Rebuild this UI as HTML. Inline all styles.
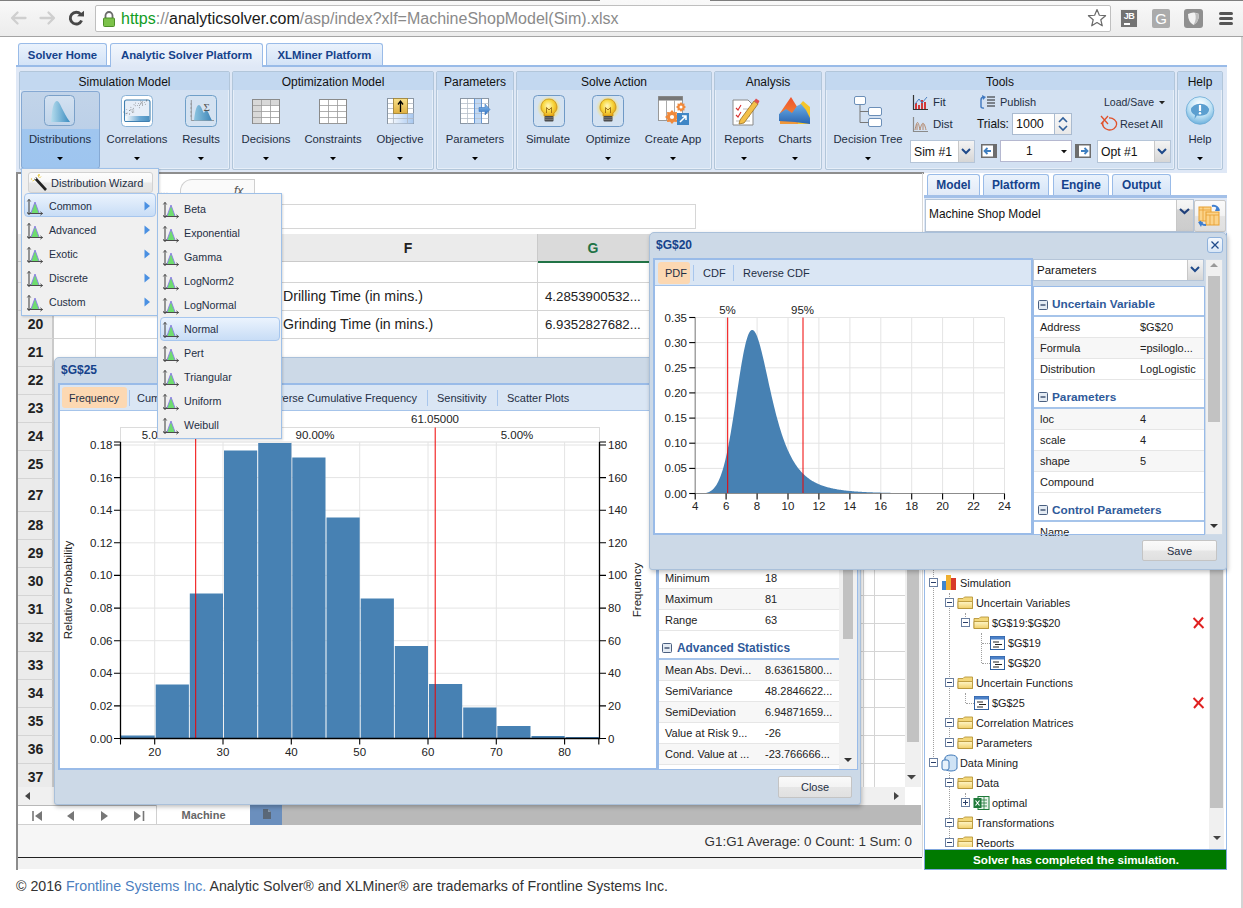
<!DOCTYPE html>
<html><head><meta charset="utf-8">
<style>
*{box-sizing:border-box;margin:0;padding:0}
html,body{width:1243px;height:908px;overflow:hidden;background:#fff;font-family:"Liberation Sans",sans-serif;font-size:12px;color:#000}
body{position:relative}
.a{position:absolute}
.t{white-space:nowrap}
svg.a{overflow:visible}
</style></head><body>
<div class="a" style="left:0px;top:0px;width:1243px;height:37px;background:linear-gradient(#f9f9f9,#ececec);border-bottom:1px solid #a4a4a4"></div>
<div class="a" style="left:0px;top:0px;width:600px;height:1px;background:#7e7e7e"></div>
<div class="a" style="left:710px;top:0px;width:533px;height:1px;background:#7e7e7e"></div>
<svg class="a" style="left:0px;top:0px;" width="100" height="37" viewBox="0 0 100 37"><path d="M25.5 18H12.5M17.5 12.5L12 18L17.5 23.5" stroke="#cfcfcf" stroke-width="2.3" fill="none" stroke-linecap="round" stroke-linejoin="round"/><path d="M40.5 18H53.5M48.5 12.5L54 18L48.5 23.5" stroke="#cfcfcf" stroke-width="2.3" fill="none" stroke-linecap="round" stroke-linejoin="round"/><path d="M80.6 14.2A5.9 5.9 0 1 0 81.6 20.5" stroke="#474747" stroke-width="2.9" fill="none"/><path d="M77 16.2L84 16.6L84 10.8Z" fill="#474747"/></svg>
<div class="a" style="left:95px;top:5px;width:1016px;height:27px;background:#fff;border:1px solid #bfbfbf;border-radius:2px"></div>
<svg class="a" style="left:102px;top:10px;" width="14" height="18" viewBox="0 0 14 18"><path d="M3.5 8V5.5A3.5 3.5 0 0 1 10.5 5.5V8" stroke="#6b6b6b" stroke-width="1.8" fill="none"/><rect x="1.5" y="8" width="11" height="8.5" rx="1" fill="#7cc24a" stroke="#4f8f2a" stroke-width="1"/></svg>
<div class="a t" style="left:121px;top:9.5px;height:18px;line-height:18px;font-size:16px;color:#8a8a8a"><span style="color:#119c24">https</span>://<span style="color:#1a1a1a">analyticsolver.com</span>/asp/index?xlf=MachineShopModel(Sim).xlsx</div>
<svg class="a" style="left:1087px;top:8px;" width="20" height="20" viewBox="0 0 20 20"><polygon points="10.00,1.50 12.35,7.26 18.56,7.72 13.80,11.74 15.29,17.78 10.00,14.50 4.71,17.78 6.20,11.74 1.44,7.72 7.65,7.26" fill="none" stroke="#6a6a6a" stroke-width="1.2" stroke-linejoin="round"/></svg>
<div class="a" style="left:1120px;top:9px;width:18px;height:19px;background:#737373;border:1px solid #eee;color:#fff;font-weight:bold;font-size:9px;line-height:10px;text-align:center;letter-spacing:-0.5px"><div style="margin-top:1px">JB</div><div style="position:absolute;left:3px;top:13px;width:6px;height:2px;background:#fff"></div></div>
<div class="a" style="left:1152px;top:9px;width:18px;height:19px;background:#ababab;border-radius:2px;color:#fff;font-size:15px;line-height:19px;text-align:center">G</div>
<svg class="a" style="left:1184px;top:9px;" width="19" height="19" viewBox="0 0 19 19"><rect x="0" y="0" width="19" height="19" rx="3" fill="#8f8f8f"/><path d="M4 5 Q9.5 2 15 5 Q15 13 9.5 16 Q4 13 4 5Z" fill="#f2f2f2"/><path d="M15 5 Q15 13 9.5 16 Q13 10 11 4Z" fill="#bdbdbd"/></svg>
<div class="a" style="left:1219px;top:12px;width:14px;height:3px;background:#555;border-radius:1.5px"></div>
<div class="a" style="left:1219px;top:17px;width:14px;height:3px;background:#555;border-radius:1.5px"></div>
<div class="a" style="left:1219px;top:22px;width:14px;height:3px;background:#555;border-radius:1.5px"></div>
<div class="a" style="left:1241px;top:37px;width:2px;height:871px;background:#d4d4d4"></div>
<div class="a" style="left:16px;top:65px;width:1211px;height:2px;background:#99bbe8"></div>
<div class="a" style="left:18px;top:43px;width:89px;height:22px;background:linear-gradient(#eaf2fc,#d3e3f7);border:1px solid #99bbe8;border-bottom:none;border-radius:3px 3px 0 0"></div>
<div class="a t" style="left:2.50px;top:47.50px;width:120px;text-align:center;height:15px;line-height:15px;font-size:11.35px;font-weight:bold;color:#15428b">Solver Home</div>
<div class="a" style="left:110px;top:43px;width:153px;height:24px;background:linear-gradient(#f2f7fd,#dfe8f6);border:1px solid #99bbe8;border-bottom:none;border-radius:3px 3px 0 0"></div>
<div class="a t" style="left:86.50px;top:47.50px;width:200px;text-align:center;height:15px;line-height:15px;font-size:11.35px;font-weight:bold;color:#15428b">Analytic Solver Platform</div>
<div class="a" style="left:266px;top:43px;width:117px;height:22px;background:linear-gradient(#eaf2fc,#d3e3f7);border:1px solid #99bbe8;border-bottom:none;border-radius:3px 3px 0 0"></div>
<div class="a t" style="left:249.50px;top:47.50px;width:150px;text-align:center;height:15px;line-height:15px;font-size:11.35px;font-weight:bold;color:#15428b">XLMiner Platform</div>
<div class="a" style="left:16px;top:67px;width:1211px;height:106px;background:#dfe8f6"></div>
<div class="a" style="left:16px;top:172px;width:908px;height:2px;background:#8e8e8e"></div>
<div class="a" style="left:19px;top:71px;width:211px;height:99px;background:#d3e1f2;border:1px solid #b2c6da;border-radius:2px;box-shadow:inset 0 0 0 1px #e6eef8"></div>
<div class="a" style="left:20px;top:72px;width:209px;height:18px;background:#c3d8f0"></div>
<div class="a t" style="left:24.50px;top:73.50px;width:200px;text-align:center;height:16px;line-height:16px;font-size:12px;color:#111">Simulation Model</div>
<div class="a" style="left:232px;top:71px;width:202px;height:99px;background:#d3e1f2;border:1px solid #b2c6da;border-radius:2px;box-shadow:inset 0 0 0 1px #e6eef8"></div>
<div class="a" style="left:233px;top:72px;width:200px;height:18px;background:#c3d8f0"></div>
<div class="a t" style="left:233.00px;top:73.50px;width:200px;text-align:center;height:16px;line-height:16px;font-size:12px;color:#111">Optimization Model</div>
<div class="a" style="left:436px;top:71px;width:78px;height:99px;background:#d3e1f2;border:1px solid #b2c6da;border-radius:2px;box-shadow:inset 0 0 0 1px #e6eef8"></div>
<div class="a" style="left:437px;top:72px;width:76px;height:18px;background:#c3d8f0"></div>
<div class="a t" style="left:375.00px;top:73.50px;width:200px;text-align:center;height:16px;line-height:16px;font-size:12px;color:#111">Parameters</div>
<div class="a" style="left:516px;top:71px;width:196px;height:99px;background:#d3e1f2;border:1px solid #b2c6da;border-radius:2px;box-shadow:inset 0 0 0 1px #e6eef8"></div>
<div class="a" style="left:517px;top:72px;width:194px;height:18px;background:#c3d8f0"></div>
<div class="a t" style="left:514.00px;top:73.50px;width:200px;text-align:center;height:16px;line-height:16px;font-size:12px;color:#111">Solve Action</div>
<div class="a" style="left:714px;top:71px;width:108px;height:99px;background:#d3e1f2;border:1px solid #b2c6da;border-radius:2px;box-shadow:inset 0 0 0 1px #e6eef8"></div>
<div class="a" style="left:715px;top:72px;width:106px;height:18px;background:#c3d8f0"></div>
<div class="a t" style="left:668.00px;top:73.50px;width:200px;text-align:center;height:16px;line-height:16px;font-size:12px;color:#111">Analysis</div>
<div class="a" style="left:825px;top:71px;width:350px;height:99px;background:#d3e1f2;border:1px solid #b2c6da;border-radius:2px;box-shadow:inset 0 0 0 1px #e6eef8"></div>
<div class="a" style="left:826px;top:72px;width:348px;height:18px;background:#c3d8f0"></div>
<div class="a t" style="left:900.00px;top:73.50px;width:200px;text-align:center;height:16px;line-height:16px;font-size:12px;color:#111">Tools</div>
<div class="a" style="left:1177px;top:71px;width:46px;height:99px;background:#d3e1f2;border:1px solid #b2c6da;border-radius:2px;box-shadow:inset 0 0 0 1px #e6eef8"></div>
<div class="a" style="left:1178px;top:72px;width:44px;height:18px;background:#c3d8f0"></div>
<div class="a t" style="left:1100.00px;top:73.50px;width:200px;text-align:center;height:16px;line-height:16px;font-size:12px;color:#111">Help</div>
<div class="a" style="left:21px;top:91px;width:79px;height:78px;background:linear-gradient(#c2d4e9 0,#bcd0e8 48%,#a0c6ef 49%,#9ec5ef 100%);border:1px solid #86a9d3;border-radius:3px"></div>
<div class="a t" style="left:0.00px;top:132.00px;width:120px;text-align:center;height:15px;line-height:15px;font-size:11.3px;color:#1f2f44">Distributions</div>
<svg class="a" style="left:56.5px;top:157.0px;" width="6" height="4" viewBox="0 0 6 4"><path d="M0 0H6L3 3.2Z" fill="#000"/></svg>
<div class="a t" style="left:77.00px;top:132.00px;width:120px;text-align:center;height:15px;line-height:15px;font-size:11.3px;color:#1f2f44">Correlations</div>
<svg class="a" style="left:133.5px;top:157.0px;" width="6" height="4" viewBox="0 0 6 4"><path d="M0 0H6L3 3.2Z" fill="#000"/></svg>
<div class="a t" style="left:141.00px;top:132.00px;width:120px;text-align:center;height:15px;line-height:15px;font-size:11.3px;color:#1f2f44">Results</div>
<svg class="a" style="left:197.5px;top:157.0px;" width="6" height="4" viewBox="0 0 6 4"><path d="M0 0H6L3 3.2Z" fill="#000"/></svg>
<div class="a t" style="left:206.00px;top:132.00px;width:120px;text-align:center;height:15px;line-height:15px;font-size:11.3px;color:#1f2f44">Decisions</div>
<svg class="a" style="left:262.5px;top:157.0px;" width="6" height="4" viewBox="0 0 6 4"><path d="M0 0H6L3 3.2Z" fill="#000"/></svg>
<div class="a t" style="left:273.00px;top:132.00px;width:120px;text-align:center;height:15px;line-height:15px;font-size:11.3px;color:#1f2f44">Constraints</div>
<svg class="a" style="left:329.5px;top:157.0px;" width="6" height="4" viewBox="0 0 6 4"><path d="M0 0H6L3 3.2Z" fill="#000"/></svg>
<div class="a t" style="left:340.00px;top:132.00px;width:120px;text-align:center;height:15px;line-height:15px;font-size:11.3px;color:#1f2f44">Objective</div>
<svg class="a" style="left:396.5px;top:157.0px;" width="6" height="4" viewBox="0 0 6 4"><path d="M0 0H6L3 3.2Z" fill="#000"/></svg>
<div class="a t" style="left:415.00px;top:132.00px;width:120px;text-align:center;height:15px;line-height:15px;font-size:11.3px;color:#1f2f44">Parameters</div>
<svg class="a" style="left:471.5px;top:157.0px;" width="6" height="4" viewBox="0 0 6 4"><path d="M0 0H6L3 3.2Z" fill="#000"/></svg>
<div class="a t" style="left:488.00px;top:132.00px;width:120px;text-align:center;height:15px;line-height:15px;font-size:11.3px;color:#1f2f44">Simulate</div>
<div class="a t" style="left:548.00px;top:132.00px;width:120px;text-align:center;height:15px;line-height:15px;font-size:11.3px;color:#1f2f44">Optimize</div>
<svg class="a" style="left:604.5px;top:157.0px;" width="6" height="4" viewBox="0 0 6 4"><path d="M0 0H6L3 3.2Z" fill="#000"/></svg>
<div class="a t" style="left:613.00px;top:132.00px;width:120px;text-align:center;height:15px;line-height:15px;font-size:11.3px;color:#1f2f44">Create App</div>
<svg class="a" style="left:669.5px;top:157.0px;" width="6" height="4" viewBox="0 0 6 4"><path d="M0 0H6L3 3.2Z" fill="#000"/></svg>
<div class="a t" style="left:684.00px;top:132.00px;width:120px;text-align:center;height:15px;line-height:15px;font-size:11.3px;color:#1f2f44">Reports</div>
<svg class="a" style="left:740.5px;top:157.0px;" width="6" height="4" viewBox="0 0 6 4"><path d="M0 0H6L3 3.2Z" fill="#000"/></svg>
<div class="a t" style="left:735.00px;top:132.00px;width:120px;text-align:center;height:15px;line-height:15px;font-size:11.3px;color:#1f2f44">Charts</div>
<svg class="a" style="left:791.5px;top:157.0px;" width="6" height="4" viewBox="0 0 6 4"><path d="M0 0H6L3 3.2Z" fill="#000"/></svg>
<div class="a t" style="left:808.00px;top:132.00px;width:120px;text-align:center;height:15px;line-height:15px;font-size:11.3px;color:#1f2f44">Decision Tree</div>
<svg class="a" style="left:864.5px;top:157.0px;" width="6" height="4" viewBox="0 0 6 4"><path d="M0 0H6L3 3.2Z" fill="#000"/></svg>
<div class="a t" style="left:1140.00px;top:132.00px;width:120px;text-align:center;height:15px;line-height:15px;font-size:11.3px;color:#1f2f44">Help</div>
<svg class="a" style="left:1196.5px;top:157.0px;" width="6" height="4" viewBox="0 0 6 4"><path d="M0 0H6L3 3.2Z" fill="#000"/></svg>
<svg class="a" style="left:44px;top:95px;" width="32" height="32" viewBox="0 0 32 32"><defs><linearGradient id="dg" x1="0" x2="1"><stop offset="0" stop-color="#b5dced"/><stop offset="1" stop-color="#3b8cc0"/></linearGradient><linearGradient id="db" x1="0" y1="0" x2="0" y2="1"><stop offset="0" stop-color="#d4e2f1"/><stop offset="1" stop-color="#c0d4ea"/></linearGradient></defs><rect x="0.5" y="0.5" width="30" height="30" rx="4" fill="url(#db)" stroke="#7aa0c8"/><path d="M7 27 C8 12 10 6 13 6 C16 6 18 16 26 27Z" fill="url(#dg)"/></svg>
<svg class="a" style="left:121px;top:95px;" width="32" height="32" viewBox="0 0 32 32"><defs><linearGradient id="cb" x1="0" x2="1"><stop offset="0" stop-color="#ffffff"/><stop offset="0.6" stop-color="#6aa8d4"/><stop offset="1" stop-color="#4a90c0"/></linearGradient></defs><rect x="0.5" y="0.5" width="31" height="31" rx="4" fill="#fff" stroke="#8ab2d6"/><rect x="3.5" y="5" width="25.5" height="21.5" rx="2" fill="#e6eef8" stroke="#3f7fb0" stroke-width="1.1"/><circle cx="18.3" cy="12.7" r="0.45" fill="#666"/><circle cx="24.3" cy="9.3" r="0.45" fill="#666"/><circle cx="5.3" cy="21.3" r="0.45" fill="#666"/><circle cx="19.7" cy="8.2" r="0.45" fill="#666"/><circle cx="12.4" cy="13.2" r="0.45" fill="#666"/><circle cx="13.0" cy="9.8" r="0.45" fill="#666"/><circle cx="12.8" cy="17.0" r="0.45" fill="#666"/><circle cx="9.8" cy="14.8" r="0.45" fill="#666"/><circle cx="14.5" cy="8.0" r="0.45" fill="#666"/><circle cx="19.8" cy="6.0" r="0.45" fill="#666"/><circle cx="25.9" cy="5.0" r="0.45" fill="#666"/><circle cx="23.5" cy="7.6" r="0.45" fill="#666"/><circle cx="11.5" cy="17.5" r="0.45" fill="#666"/><circle cx="25.7" cy="5.2" r="0.45" fill="#666"/><circle cx="9.9" cy="12.2" r="0.45" fill="#666"/><circle cx="5.0" cy="18.8" r="0.45" fill="#666"/><circle cx="6.1" cy="18.0" r="0.45" fill="#666"/><circle cx="12.8" cy="14.9" r="0.45" fill="#666"/><circle cx="10.9" cy="16.1" r="0.45" fill="#666"/><circle cx="8.9" cy="15.4" r="0.45" fill="#666"/><circle cx="21.3" cy="6.4" r="0.45" fill="#666"/><circle cx="19.2" cy="9.2" r="0.45" fill="#666"/><circle cx="2.5" cy="17.0" r="0.45" fill="#666"/><circle cx="21.3" cy="8.1" r="0.45" fill="#666"/><circle cx="25.3" cy="6.0" r="0.45" fill="#666"/><circle cx="11.9" cy="16.0" r="0.45" fill="#666"/><circle cx="8.5" cy="19.4" r="0.45" fill="#666"/><circle cx="18.6" cy="10.5" r="0.45" fill="#666"/><circle cx="5.8" cy="18.5" r="0.45" fill="#666"/><circle cx="21.5" cy="9.6" r="0.45" fill="#666"/><circle cx="14.2" cy="10.8" r="0.45" fill="#666"/><circle cx="5.8" cy="14.6" r="0.45" fill="#666"/><circle cx="21.1" cy="8.0" r="0.45" fill="#666"/><circle cx="8.8" cy="18.6" r="0.45" fill="#666"/><circle cx="11.1" cy="14.3" r="0.45" fill="#666"/><circle cx="20.4" cy="7.8" r="0.45" fill="#666"/><circle cx="8.6" cy="15.5" r="0.45" fill="#666"/><circle cx="16.4" cy="10.4" r="0.45" fill="#666"/><circle cx="21.6" cy="10.3" r="0.45" fill="#666"/><circle cx="17.6" cy="8.4" r="0.45" fill="#666"/><rect x="4.2" y="21" width="24.2" height="5" fill="url(#cb)"/></svg>
<svg class="a" style="left:185px;top:95px;" width="32" height="32" viewBox="0 0 32 32"><defs><linearGradient id="rg" x1="0" x2="1"><stop offset="0" stop-color="#8cc4e0"/><stop offset="1" stop-color="#3f86b8"/></linearGradient></defs><rect x="0.5" y="0.5" width="31" height="31" rx="4" fill="#d4e2f1" stroke="#6f9fc8"/><path d="M6.3 5V25.5H29" stroke="#777" stroke-width="0.7" fill="none"/><path d="M5 9H7M5 13H7M5 17H7M5 21H7" stroke="#888" stroke-width="0.6"/><path d="M9 25.5C11 8 14 8.5 16 12C17.5 15 18 17 19 18C20.5 15 21.5 15 23 17C24.5 20 25.5 23 27 25.5Z" fill="url(#rg)"/><text x="18.5" y="16" font-size="11" font-family="Liberation Serif" fill="#555">Σ</text></svg>
<svg class="a" style="left:252px;top:99px;" width="28" height="25" viewBox="0 0 28 25"><rect x="0.5" y="0.5" width="27" height="24" fill="#fff" stroke="#8a8a8a"/><rect x="1" y="1" width="8" height="23" fill="#d8d8d8"/><rect x="1" y="1" width="26" height="5" fill="#d8d8d8"/><path d="M1 6.5 H27" stroke="#9a9a9a" stroke-width="0.8"/><path d="M1 12.5 H27" stroke="#9a9a9a" stroke-width="0.8"/><path d="M1 18.5 H27" stroke="#9a9a9a" stroke-width="0.8"/><path d="M1 24.5 H27" stroke="#9a9a9a" stroke-width="0.8"/><path d="M9.5 1 V24" stroke="#9a9a9a" stroke-width="0.8"/><path d="M18.5 1 V24" stroke="#9a9a9a" stroke-width="0.8"/></svg>
<svg class="a" style="left:319px;top:99px;" width="28" height="25" viewBox="0 0 28 25"><rect x="0.5" y="0.5" width="27" height="24" fill="#fff" stroke="#8a8a8a"/><path d="M1 6.5 H27" stroke="#9a9a9a" stroke-width="0.8"/><path d="M1 12.5 H27" stroke="#9a9a9a" stroke-width="0.8"/><path d="M1 18.5 H27" stroke="#9a9a9a" stroke-width="0.8"/><path d="M1 24.5 H27" stroke="#9a9a9a" stroke-width="0.8"/><path d="M9.5 1 V24" stroke="#9a9a9a" stroke-width="0.8"/><path d="M18.5 1 V24" stroke="#9a9a9a" stroke-width="0.8"/></svg>
<svg class="a" style="left:387px;top:98px;" width="28" height="26" viewBox="0 0 28 26"><defs><linearGradient id="ob" x1="0" x2="1"><stop offset="0" stop-color="#fff"/><stop offset="1" stop-color="#a8c8f0"/></linearGradient><linearGradient id="oy" x1="0" y1="0" x2="0" y2="1"><stop offset="0" stop-color="#f8e08a"/><stop offset="1" stop-color="#e0b040"/></linearGradient></defs><rect x="0.5" y="0.5" width="26" height="25" fill="#fff" stroke="#8a96a4"/><rect x="1" y="15" width="25.5" height="10.5" fill="url(#ob)"/><path d="M1 5.5H26.5M1 10.5H26.5M1 15.5H26.5M1 20.5H26.5M6.5 1V25.5M20.5 1V25.5" stroke="#b0b8c2" stroke-width="0.8"/><rect x="6.5" y="0.5" width="14" height="15" fill="url(#oy)" stroke="#a08030" stroke-width="0.8"/><path d="M13.5 14V3.5M11 6.5L13.5 3L16 6.5" stroke="#000" stroke-width="1.3" fill="none"/></svg>
<svg class="a" style="left:460px;top:98px;" width="30" height="26" viewBox="0 0 30 26"><defs><linearGradient id="pa" x1="0" y1="0" x2="0" y2="1"><stop offset="0" stop-color="#8cc0f0"/><stop offset="1" stop-color="#2f70c0"/></linearGradient></defs><rect x="0.5" y="0.5" width="28" height="25" fill="#fff" stroke="#8a96a4"/><rect x="14.5" y="1" width="7" height="24.5" fill="#c0d8f4"/><path d="M1 5.5H28.5M1 10.5H28.5M1 15.5H28.5M1 20.5H28.5M7.5 1V25.5M14.5 1V25.5M21.5 1V25.5" stroke="#b8c0ca" stroke-width="0.8"/><path d="M14.5 0.5V25.5M21.5 0.5V25.5" stroke="#5a8fd0" stroke-width="0.9"/><path d="M19 9.5H25V6L30 11.5L25 17V13.5H19Z" fill="url(#pa)" stroke="#3f78c0" stroke-width="0.6"/></svg>
<svg class="a" style="left:533px;top:95px;" width="32" height="32" viewBox="0 0 32 32"><defs><radialGradient id="bl" cx="0.45" cy="0.4" r="0.6"><stop offset="0" stop-color="#fff8c0"/><stop offset="0.55" stop-color="#f8d840"/><stop offset="1" stop-color="#e8a818"/></radialGradient><radialGradient id="glow" cx="0.5" cy="0.5" r="0.5"><stop offset="0.6" stop-color="#f8e070" stop-opacity="0.9"/><stop offset="1" stop-color="#f8e070" stop-opacity="0"/></radialGradient></defs><rect x="0.5" y="0.5" width="31" height="31" rx="4" fill="#d4e2f1" stroke="#6f99c6"/><circle cx="16" cy="13" r="12" fill="url(#glow)"/><path d="M16 4A8 8 0 0 1 21 18.2V21H11V18.2A8 8 0 0 1 16 4Z" fill="url(#bl)" stroke="#c08a10" stroke-width="0.7"/><path d="M13.5 18V12.5L16 15L18.5 12.5V18" stroke="#8a5a10" stroke-width="0.8" fill="none"/><rect x="11.5" y="21" width="9" height="5.5" rx="1" fill="#4a4a4a"/><path d="M11.5 22.8H20.5M11.5 24.6H20.5" stroke="#999" stroke-width="0.6"/></svg>
<svg class="a" style="left:592px;top:95px;" width="32" height="32" viewBox="0 0 32 32"><defs><radialGradient id="bl" cx="0.45" cy="0.4" r="0.6"><stop offset="0" stop-color="#fff8c0"/><stop offset="0.55" stop-color="#f8d840"/><stop offset="1" stop-color="#e8a818"/></radialGradient><radialGradient id="glow" cx="0.5" cy="0.5" r="0.5"><stop offset="0.6" stop-color="#f8e070" stop-opacity="0.9"/><stop offset="1" stop-color="#f8e070" stop-opacity="0"/></radialGradient></defs><rect x="0.5" y="0.5" width="31" height="31" rx="4" fill="#d4e2f1" stroke="#6f99c6"/><circle cx="16" cy="13" r="12" fill="url(#glow)"/><path d="M16 4A8 8 0 0 1 21 18.2V21H11V18.2A8 8 0 0 1 16 4Z" fill="url(#bl)" stroke="#c08a10" stroke-width="0.7"/><path d="M13.5 18V12.5L16 15L18.5 12.5V18" stroke="#8a5a10" stroke-width="0.8" fill="none"/><rect x="11.5" y="21" width="9" height="5.5" rx="1" fill="#4a4a4a"/><path d="M11.5 22.8H20.5M11.5 24.6H20.5" stroke="#999" stroke-width="0.6"/></svg>
<svg class="a" style="left:658px;top:96px;" width="32" height="31" viewBox="0 0 32 31"><rect x="0.5" y="0.5" width="24" height="24" fill="#fff" stroke="#999"/><rect x="0.5" y="0.5" width="24" height="4" fill="#777"/><path d="M8.5 4V24M16.5 4V24" stroke="#aaa"/><polygon points="21.00,21.00 18.66,22.93 18.95,25.95 15.93,25.66 14.00,28.00 12.07,25.66 9.05,25.95 9.34,22.93 7.00,21.00 9.34,19.07 9.05,16.05 12.07,16.34 14.00,14.00 15.93,16.34 18.95,16.05 18.66,19.07" fill="#f08a3c"/><circle cx="14" cy="21" r="2.10" fill="#fff"/><polygon points="28.00,11.00 26.33,12.38 26.54,14.54 24.38,14.33 23.00,16.00 21.62,14.33 19.46,14.54 19.67,12.38 18.00,11.00 19.67,9.62 19.46,7.46 21.62,7.67 23.00,6.00 24.38,7.67 26.54,7.46 26.33,9.62" fill="#f08a3c"/><circle cx="23" cy="11" r="1.50" fill="#fff"/><rect x="19" y="17" width="12" height="12" fill="#3f86c6"/><path d="M22 26L28 20M24 20H28V24" stroke="#fff" stroke-width="1.5" fill="none"/></svg>
<svg class="a" style="left:731px;top:96px;" width="28" height="30" viewBox="0 0 28 30"><path d="M2 4H17L22 9V29H2Z" fill="#fff" stroke="#8a8a8a"/><path d="M5 12L7 14L10 9M5 19L7 21L10 16" stroke="#d83030" stroke-width="1.1" fill="none"/><path d="M12 13H19M12 20H19M5 25H19" stroke="#bbb"/><path d="M9 24L23 5L27 8L13 27L8 28Z" fill="#f4c04a" stroke="#9a7020" stroke-width="0.8"/><path d="M23 5L25 2.5L28.5 5L27 8Z" fill="#e05050"/></svg>
<svg class="a" style="left:778px;top:95px;" width="34" height="31" viewBox="0 0 34 31"><defs><linearGradient id="chb" x1="0" y1="0" x2="0" y2="1"><stop offset="0" stop-color="#6aaee8"/><stop offset="1" stop-color="#2a64b0"/></linearGradient><linearGradient id="cho" x1="0" y1="0" x2="0" y2="1"><stop offset="0" stop-color="#f0502a"/><stop offset="1" stop-color="#f09a3a"/></linearGradient></defs><path d="M2 18L13 2L21 15L22 29L2 29Z" fill="url(#cho)"/><path d="M20 12L25 6L32 12L32 29L20 29Z" fill="#f5c52a"/><path d="M1 19L8 14L14 18L19 11L23 9L28 15L32 23L32 29L17 27L1 26Z" fill="url(#chb)"/></svg>
<svg class="a" style="left:854px;top:96px;" width="30" height="32" viewBox="0 0 30 32"><rect x="0.5" y="0.5" width="11" height="8" rx="1.5" fill="#fff" stroke="#6c8fb8"/><rect x="14.5" y="11.5" width="13" height="8" rx="1.5" fill="#fff" stroke="#6c8fb8"/><rect x="14.5" y="22.5" width="13" height="8" rx="1.5" fill="#fff" stroke="#6c8fb8"/><path d="M6 9V26.5H14.5M6 15.5H14.5" stroke="#777" fill="none"/></svg>
<svg class="a" style="left:1185px;top:96px;" width="30" height="30" viewBox="0 0 30 30"><defs><radialGradient id="hg" cx="0.5" cy="0.3" r="0.75"><stop offset="0" stop-color="#ffffff"/><stop offset="0.55" stop-color="#bfe2f5"/><stop offset="1" stop-color="#5fa8d8"/></radialGradient></defs><circle cx="15" cy="14.5" r="13.8" fill="url(#hg)" stroke="#6aaad6" stroke-width="0.8"/><path d="M6 14A9 6 0 1 1 12 19.5L9.5 23L10 19A9 6 0 0 1 6 14Z" fill="#5b9fd0"/><path d="M15 9V15" stroke="#fff" stroke-width="2.2"/><circle cx="15" cy="17.3" r="1.2" fill="#fff"/></svg>
<svg class="a" style="left:912px;top:94px;" width="17" height="17" viewBox="0 0 17 17"><path d="M1.5 1V15.5H16" stroke="#333" stroke-width="1.2" fill="none"/><path d="M4 15V9M7 15V11M10 15V6M13 15V8" stroke="#d23a3a" stroke-width="2"/><path d="M3 10L7 5L10 9L15 3" stroke="#4a80c0" stroke-width="1" fill="none"/></svg>
<div class="a t" style="left:933px;top:94.50px;height:15px;line-height:15px;font-size:11.5px;color:#1f2f44">Fit</div>
<svg class="a" style="left:912px;top:116px;" width="17" height="17" viewBox="0 0 17 17"><path d="M1.5 1V15.5H16" stroke="#8a8a8a" stroke-width="1.2" fill="none"/><path d="M3 14C5 4 6 4 8 14M8 14C10 5 12 5 14 14M5 8V14M11 8V14" stroke="#b08060" stroke-width="0.9" fill="none"/></svg>
<div class="a t" style="left:933px;top:116.50px;height:15px;line-height:15px;font-size:11.5px;color:#1f2f44">Dist</div>
<svg class="a" style="left:979px;top:94px;" width="18" height="16" viewBox="0 0 18 16"><path d="M5 3A3 3 0 0 0 2 6V13A3 3 0 0 0 5 14" stroke="#3f78c0" stroke-width="1.4" fill="none"/><path d="M3 1L7 3L4 6Z" fill="#3f78c0"/><path d="M8 3H16M8 6H16M8 9H16M8 12H16" stroke="#222" stroke-width="1.2"/></svg>
<div class="a t" style="left:1000px;top:95.00px;height:14px;line-height:14px;font-size:11px;color:#1f2f44">Publish</div>
<div class="a t" style="left:977px;top:116.50px;height:15px;line-height:15px;font-size:11.9px;color:#111">Trials:</div>
<div class="a" style="left:1012px;top:113px;width:43px;height:22px;background:#fff;border:1px solid #aabbd0"></div>
<div class="a t" style="left:1016px;top:116.00px;height:16px;line-height:16px;font-size:12.5px;color:#111">1000</div>
<div class="a" style="left:1054px;top:113px;width:18px;height:22px;background:linear-gradient(#f8f8f8,#e8e8e8);border:1px solid #aabbd0"></div>
<svg class="a" style="left:1056px;top:115px;" width="14" height="18" viewBox="0 0 14 18"><path d="M3 7L7 3L11 7M3 11L7 15L11 11" stroke="#2f5f9a" stroke-width="1.6" fill="none"/></svg>
<div class="a t" style="left:1104px;top:95.00px;height:14px;line-height:14px;font-size:10.5px;color:#1f2f44">Load/Save</div>
<svg class="a" style="left:1158.5px;top:101.0px;" width="6" height="4" viewBox="0 0 6 4"><path d="M0 0H6L3 3.2Z" fill="#222"/></svg>
<svg class="a" style="left:1099px;top:115px;" width="20" height="19" viewBox="0 0 20 19"><path d="M4 7A7 6 0 1 0 10 3" stroke="#e0502a" stroke-width="1.3" fill="none"/><path d="M2 1L9 9M9 1L2 9" stroke="#e0502a" stroke-width="1.3"/></svg>
<div class="a t" style="left:1120px;top:117.00px;height:14px;line-height:14px;font-size:10.9px;color:#1f2f44">Reset All</div>
<div class="a" style="left:910px;top:140px;width:65px;height:23px;background:#fff;border:1px solid #b5c5d8"></div>
<div class="a" style="left:958px;top:141px;width:16px;height:21px;background:linear-gradient(#f4f4f4,#d6d6d6);border-left:1px solid #c8c8c8"></div>
<svg class="a" style="left:961px;top:148px;" width="10" height="7" viewBox="0 0 10 7"><path d="M1 1L5 5L9 1" stroke="#1f4a8a" stroke-width="2" fill="none"/></svg>
<div class="a t" style="left:914px;top:143.50px;height:16px;line-height:16px;font-size:12.2px;color:#111">Sim #1</div>
<div class="a" style="left:1097px;top:140px;width:74px;height:23px;background:#fff;border:1px solid #b5c5d8"></div>
<div class="a" style="left:1154px;top:141px;width:16px;height:21px;background:linear-gradient(#f4f4f4,#d6d6d6);border-left:1px solid #c8c8c8"></div>
<svg class="a" style="left:1157px;top:148px;" width="10" height="7" viewBox="0 0 10 7"><path d="M1 1L5 5L9 1" stroke="#1f4a8a" stroke-width="2" fill="none"/></svg>
<div class="a t" style="left:1101px;top:143.50px;height:16px;line-height:16px;font-size:12.2px;color:#111">Opt #1</div>
<svg class="a" style="left:981px;top:144px;" width="16" height="14" viewBox="0 0 16 14"><rect x="0" y="0" width="16" height="14" fill="#6d6d6d"/><rect x="1.5" y="1.5" width="10.5" height="11" fill="#fff"/><path d="M10 7H3.5M6.5 4L3.5 7L6.5 10" stroke="#3f7fc0" stroke-width="1.8" fill="none"/></svg>
<div class="a" style="left:1000px;top:140px;width:72px;height:22px;background:#fff;border:1px solid #b5b8d0"></div>
<div class="a t" style="left:1026px;top:143.00px;height:16px;line-height:16px;font-size:12px;color:#111">1</div>
<svg class="a" style="left:1060.5px;top:150.0px;" width="6" height="4" viewBox="0 0 6 4"><path d="M0 0H6L3 3.2Z" fill="#111"/></svg>
<svg class="a" style="left:1075px;top:144px;" width="16" height="14" viewBox="0 0 16 14"><rect x="0" y="0" width="16" height="14" fill="#6d6d6d"/><rect x="4" y="1.5" width="10.5" height="11" fill="#fff"/><path d="M6 7H12.5M9.5 4L12.5 7L9.5 10" stroke="#3f7fc0" stroke-width="1.8" fill="none"/></svg>
<div class="a" style="left:16px;top:174px;width:907px;height:696px;background:#fff"></div>
<div class="a" style="left:16px;top:174px;width:2px;height:696px;background:#8c8c8c"></div>
<div class="a" style="left:922px;top:173px;width:1px;height:684px;background:#d8d8d8"></div>
<div class="a" style="left:180px;top:179px;width:75px;height:26px;background:#fafafa;border:1px solid #cfcfcf;border-bottom:none;border-radius:12px 0 0 0"></div>
<div class="a t" style="left:234px;top:183.00px;height:16px;line-height:16px;font-size:12px;color:#555"><i>fx</i></div>
<div class="a t" style="left:160px;top:183.50px;height:13px;line-height:13px;font-size:10px;color:#888">...</div>
<div class="a" style="left:56px;top:204px;width:640px;height:25px;background:#fff;border:1px solid #d6d6d6"></div>
<div class="a" style="left:18px;top:234px;width:904px;height:28px;background:#ebebeb;border-bottom:1px solid #cacaca"></div>
<div class="a" style="left:537px;top:234px;width:120px;height:28px;background:#dadada"></div>
<div class="a" style="left:537px;top:261px;width:120px;height:2px;background:#217346"></div>
<div class="a t" style="left:378.00px;top:239.00px;width:60px;text-align:center;height:18px;line-height:18px;font-size:14px;font-weight:bold;color:#222">F</div>
<div class="a t" style="left:563.00px;top:239.00px;width:60px;text-align:center;height:18px;line-height:18px;font-size:14px;font-weight:bold;color:#217346">G</div>
<div class="a" style="left:53px;top:234px;width:1px;height:28px;background:#cacaca"></div>
<div class="a" style="left:95px;top:234px;width:1px;height:28px;background:#cacaca"></div>
<div class="a" style="left:279px;top:234px;width:1px;height:28px;background:#cacaca"></div>
<div class="a" style="left:537px;top:234px;width:1px;height:28px;background:#cacaca"></div>
<div class="a" style="left:18px;top:262px;width:35px;height:525px;background:#ebebeb;border-right:1px solid #cacaca"></div>
<div class="a" style="left:18px;top:282px;width:887px;height:1px;background:#d4d4d4"></div>
<div class="a" style="left:18px;top:310px;width:887px;height:1px;background:#d4d4d4"></div>
<div class="a t" style="left:15.50px;top:287.00px;width:40px;text-align:center;height:18px;line-height:18px;font-size:14px;font-weight:bold;color:#222">19</div>
<div class="a" style="left:18px;top:338px;width:887px;height:1px;background:#d4d4d4"></div>
<div class="a t" style="left:15.50px;top:315.00px;width:40px;text-align:center;height:18px;line-height:18px;font-size:14px;font-weight:bold;color:#222">20</div>
<div class="a" style="left:18px;top:366px;width:887px;height:1px;background:#d4d4d4"></div>
<div class="a t" style="left:15.50px;top:343.00px;width:40px;text-align:center;height:18px;line-height:18px;font-size:14px;font-weight:bold;color:#222">21</div>
<div class="a" style="left:18px;top:394px;width:887px;height:1px;background:#d4d4d4"></div>
<div class="a t" style="left:15.50px;top:371.00px;width:40px;text-align:center;height:18px;line-height:18px;font-size:14px;font-weight:bold;color:#222">22</div>
<div class="a" style="left:18px;top:422px;width:887px;height:1px;background:#d4d4d4"></div>
<div class="a t" style="left:15.50px;top:399.00px;width:40px;text-align:center;height:18px;line-height:18px;font-size:14px;font-weight:bold;color:#222">23</div>
<div class="a" style="left:18px;top:450px;width:887px;height:1px;background:#d4d4d4"></div>
<div class="a t" style="left:15.50px;top:427.00px;width:40px;text-align:center;height:18px;line-height:18px;font-size:14px;font-weight:bold;color:#222">24</div>
<div class="a" style="left:18px;top:478px;width:887px;height:1px;background:#d4d4d4"></div>
<div class="a t" style="left:15.50px;top:455.00px;width:40px;text-align:center;height:18px;line-height:18px;font-size:14px;font-weight:bold;color:#222">25</div>
<div class="a" style="left:18px;top:511px;width:887px;height:1px;background:#d4d4d4"></div>
<div class="a t" style="left:15.50px;top:485.50px;width:40px;text-align:center;height:18px;line-height:18px;font-size:14px;font-weight:bold;color:#222">27</div>
<div class="a" style="left:18px;top:539px;width:887px;height:1px;background:#d4d4d4"></div>
<div class="a t" style="left:15.50px;top:516.00px;width:40px;text-align:center;height:18px;line-height:18px;font-size:14px;font-weight:bold;color:#222">28</div>
<div class="a" style="left:18px;top:567px;width:887px;height:1px;background:#d4d4d4"></div>
<div class="a t" style="left:15.50px;top:544.00px;width:40px;text-align:center;height:18px;line-height:18px;font-size:14px;font-weight:bold;color:#222">29</div>
<div class="a" style="left:18px;top:595px;width:887px;height:1px;background:#d4d4d4"></div>
<div class="a t" style="left:15.50px;top:572.00px;width:40px;text-align:center;height:18px;line-height:18px;font-size:14px;font-weight:bold;color:#222">30</div>
<div class="a" style="left:18px;top:623px;width:887px;height:1px;background:#d4d4d4"></div>
<div class="a t" style="left:15.50px;top:600.00px;width:40px;text-align:center;height:18px;line-height:18px;font-size:14px;font-weight:bold;color:#222">31</div>
<div class="a" style="left:18px;top:651px;width:887px;height:1px;background:#d4d4d4"></div>
<div class="a t" style="left:15.50px;top:628.00px;width:40px;text-align:center;height:18px;line-height:18px;font-size:14px;font-weight:bold;color:#222">32</div>
<div class="a" style="left:18px;top:679px;width:887px;height:1px;background:#d4d4d4"></div>
<div class="a t" style="left:15.50px;top:656.00px;width:40px;text-align:center;height:18px;line-height:18px;font-size:14px;font-weight:bold;color:#222">33</div>
<div class="a" style="left:18px;top:707px;width:887px;height:1px;background:#d4d4d4"></div>
<div class="a t" style="left:15.50px;top:684.00px;width:40px;text-align:center;height:18px;line-height:18px;font-size:14px;font-weight:bold;color:#222">34</div>
<div class="a" style="left:18px;top:735px;width:887px;height:1px;background:#d4d4d4"></div>
<div class="a t" style="left:15.50px;top:712.00px;width:40px;text-align:center;height:18px;line-height:18px;font-size:14px;font-weight:bold;color:#222">35</div>
<div class="a" style="left:18px;top:763px;width:887px;height:1px;background:#d4d4d4"></div>
<div class="a t" style="left:15.50px;top:740.00px;width:40px;text-align:center;height:18px;line-height:18px;font-size:14px;font-weight:bold;color:#222">36</div>
<div class="a t" style="left:15.50px;top:768.00px;width:40px;text-align:center;height:18px;line-height:18px;font-size:14px;font-weight:bold;color:#222">37</div>
<div class="a" style="left:95px;top:262px;width:1px;height:525px;background:#d4d4d4"></div>
<div class="a" style="left:279px;top:262px;width:1px;height:525px;background:#d4d4d4"></div>
<div class="a" style="left:537px;top:262px;width:1px;height:525px;background:#d4d4d4"></div>
<div class="a" style="left:863px;top:262px;width:1px;height:525px;background:#d4d4d4"></div>
<div class="a" style="left:874px;top:262px;width:1px;height:525px;background:#d4d4d4"></div>
<div class="a" style="left:53px;top:262px;width:1px;height:525px;background:#cacaca"></div>
<div class="a t" style="left:283px;top:287.00px;height:18px;line-height:18px;font-size:14.15px;color:#222">Drilling Time (in mins.)</div>
<div class="a t" style="left:283px;top:315.00px;height:18px;line-height:18px;font-size:14.15px;color:#222">Grinding Time (in mins.)</div>
<div class="a t" style="left:545px;top:287.50px;height:17px;line-height:17px;font-size:13.25px;color:#222">4.2853900532...</div>
<div class="a t" style="left:545px;top:315.50px;height:17px;line-height:17px;font-size:13.25px;color:#222">6.9352827682...</div>
<div class="a" style="left:905px;top:262px;width:16px;height:525px;background:#f0f0f0"></div>
<div class="a" style="left:907px;top:300px;width:12px;height:442px;background:#c2c2c2"></div>
<svg class="a" style="left:907px;top:775px;" width="10" height="6" viewBox="0 0 10 6"><path d="M0 0H9L4.5 4.5Z" fill="#444"/></svg>
<div class="a" style="left:18px;top:787px;width:903px;height:18px;background:#f0f0f0"></div>
<div class="a" style="left:905px;top:787px;width:16px;height:18px;background:#fff"></div>
<svg class="a" style="left:25px;top:792px;" width="6" height="9" viewBox="0 0 6 9"><path d="M5 0V8L0 4Z" fill="#444"/></svg>
<svg class="a" style="left:894px;top:792px;" width="6" height="9" viewBox="0 0 6 9"><path d="M0 0V8L5 4Z" fill="#444"/></svg>
<div class="a" style="left:18px;top:805px;width:903px;height:20px;background:#b9b9b9"></div>
<div class="a" style="left:18px;top:805px;width:138px;height:20px;background:#fff;border-bottom:1px solid #d0d0d0;border-top:1px solid #b8b8b8"></div>
<div class="a" style="left:156px;top:805px;width:1px;height:20px;background:#d0d0d0"></div>
<svg class="a" style="left:32px;top:811px;" width="12" height="11" viewBox="0 0 12 11"><path d="M1 0V10" stroke="#777" stroke-width="1.6"/><path d="M10 0V10L3 5Z" fill="#777"/></svg>
<svg class="a" style="left:66px;top:811px;" width="10" height="11" viewBox="0 0 10 11"><path d="M8 0V10L1 5Z" fill="#777"/></svg>
<svg class="a" style="left:100px;top:811px;" width="10" height="11" viewBox="0 0 10 11"><path d="M1 0V10L8 5Z" fill="#777"/></svg>
<svg class="a" style="left:134px;top:811px;" width="12" height="11" viewBox="0 0 12 11"><path d="M0 0V10L7 5Z" fill="#777"/><path d="M9.5 0V10" stroke="#777" stroke-width="1.6"/></svg>
<div class="a" style="left:157px;top:805px;width:93px;height:20px;background:#fff;border-bottom:1px solid #d0d0d0"></div>
<div class="a t" style="left:158.50px;top:808.00px;width:90px;text-align:center;height:14px;line-height:14px;font-size:11px;font-weight:bold;color:#666">Machine</div>
<div class="a" style="left:250px;top:805px;width:32px;height:20px;background:#6b8fbd"></div>
<svg class="a" style="left:263px;top:809px;" width="8" height="10" viewBox="0 0 8 10"><path d="M0 0H5L8 3V10H0Z" fill="#5a6878"/><path d="M5 0V3H8" fill="#8a9aaa"/></svg>
<div class="a" style="left:18px;top:825px;width:904px;height:32px;background:#f6f6f6"></div>
<div class="a t" style="left:612.00px;top:832.50px;width:300px;text-align:right;height:17px;line-height:17px;font-size:13.4px;color:#333">G1:G1 Average: 0 Count: 1 Sum: 0</div>
<div class="a" style="left:18px;top:857px;width:904px;height:1px;background:#222"></div>
<div class="a" style="left:18px;top:858px;width:904px;height:11px;background:#f2f2f2"></div>
<div class="a" style="left:924px;top:173px;width:303px;height:697px;background:#fff"></div>
<div class="a" style="left:927px;top:174px;width:53px;height:23px;background:linear-gradient(#f2f7fd,#dfe8f6);border:1px solid #99bbe8;border-bottom:none;border-radius:3px 3px 0 0"></div>
<div class="a t" style="left:903.50px;top:177.50px;width:100px;text-align:center;height:15px;line-height:15px;font-size:11.9px;font-weight:bold;color:#15428b">Model</div>
<div class="a" style="left:983px;top:174px;width:66px;height:23px;background:linear-gradient(#eaf2fc,#d3e3f7);border:1px solid #99bbe8;border-bottom:none;border-radius:3px 3px 0 0"></div>
<div class="a t" style="left:966.00px;top:177.50px;width:100px;text-align:center;height:15px;line-height:15px;font-size:11.9px;font-weight:bold;color:#15428b">Platform</div>
<div class="a" style="left:1053px;top:174px;width:56px;height:23px;background:linear-gradient(#eaf2fc,#d3e3f7);border:1px solid #99bbe8;border-bottom:none;border-radius:3px 3px 0 0"></div>
<div class="a t" style="left:1031.00px;top:177.50px;width:100px;text-align:center;height:15px;line-height:15px;font-size:11.9px;font-weight:bold;color:#15428b">Engine</div>
<div class="a" style="left:1112px;top:174px;width:59px;height:23px;background:linear-gradient(#eaf2fc,#d3e3f7);border:1px solid #99bbe8;border-bottom:none;border-radius:3px 3px 0 0"></div>
<div class="a t" style="left:1091.50px;top:177.50px;width:100px;text-align:center;height:15px;line-height:15px;font-size:11.9px;font-weight:bold;color:#15428b">Output</div>
<div class="a" style="left:924px;top:195px;width:303px;height:3px;background:#a3c0e8"></div>
<div class="a" style="left:924px;top:198px;width:303px;height:35px;background:#dfe8f6"></div>
<div class="a" style="left:925px;top:199px;width:269px;height:33px;background:#fff;border:1px solid #b5c5d8"></div>
<div class="a" style="left:1176px;top:200px;width:17px;height:31px;background:linear-gradient(#f6f6f6 0,#f0f0f0 30%,#d2d2d2 31%,#cccccc 100%);border-left:1px solid #c8c8c8"></div>
<svg class="a" style="left:1179px;top:208px;" width="11" height="7" viewBox="0 0 11 7"><path d="M1 1L5.5 5L10 1" stroke="#1f3f7a" stroke-width="2.2" fill="none"/></svg>
<div class="a t" style="left:929px;top:207.00px;height:15px;line-height:15px;font-size:11.9px;color:#111">Machine Shop Model</div>
<div class="a" style="left:1194px;top:200px;width:32px;height:32px;background:linear-gradient(#fafafa 0,#f3f3f3 48%,#e4e4e4 52%,#e0e0e0 100%);border:1px solid #c8c8c8;border-radius:2px"></div>
<svg class="a" style="left:1197px;top:203px;" width="26" height="25" viewBox="0 0 26 25"><rect x="2" y="4" width="12" height="14" fill="#fbd38a" stroke="#e8a030"/><rect x="9" y="9" width="13" height="13" fill="#fbd38a" stroke="#e8a030"/><path d="M2 7H14M9 12H22M6 4V18M13 12V22M17 12V22" stroke="#e8a030" stroke-width="0.8"/><path d="M15 3A6 6 0 0 1 22 7" stroke="#3f7fd0" stroke-width="2" fill="none"/><path d="M20 3L23 8L18 8Z" fill="#3f7fd0"/><path d="M9 22A6 6 0 0 1 3 18" stroke="#3f7fd0" stroke-width="2" fill="none"/><path d="M1 19L6 19L4 24Z" fill="#3f7fd0"/></svg>
<div class="a" style="left:924px;top:233px;width:303px;height:617px;background:#fff;border-left:1px solid #99bbe8;border-right:1px solid #99bbe8"></div>
<div class="a" style="left:1209px;top:233px;width:15px;height:617px;background:#f0f0f0"></div>
<div class="a" style="left:1210px;top:300px;width:13px;height:508px;background:#c2c2c2"></div>
<svg class="a" style="left:1213px;top:836px;" width="9" height="5" viewBox="0 0 9 5"><path d="M0 0H8L4 4Z" fill="#444"/></svg>
<div class="a" style="left:933px;top:560px;width:1px;height:203px;border-left:1px dotted #a0a0a0"></div>
<div class="a" style="left:949px;top:593px;width:1px;height:150px;border-left:1px dotted #a0a0a0"></div>
<div class="a" style="left:949px;top:773px;width:1px;height:77px;border-left:1px dotted #a0a0a0"></div>
<div class="a" style="left:965px;top:613px;width:1px;height:10px;border-left:1px dotted #a0a0a0"></div>
<div class="a" style="left:965px;top:693px;width:1px;height:10px;border-left:1px dotted #a0a0a0"></div>
<div class="a" style="left:965px;top:793px;width:1px;height:10px;border-left:1px dotted #a0a0a0"></div>
<div class="a" style="left:981px;top:633px;width:1px;height:30px;border-left:1px dotted #a0a0a0"></div>
<div class="a" style="left:966px;top:703px;width:8px;height:1px;border-top:1px dotted #a0a0a0"></div>
<div class="a" style="left:982px;top:643px;width:8px;height:1px;border-top:1px dotted #a0a0a0"></div>
<div class="a" style="left:982px;top:663px;width:8px;height:1px;border-top:1px dotted #a0a0a0"></div>
<svg class="a" style="left:929px;top:578px;" width="9" height="9" viewBox="0 0 9 9"><rect x="0.5" y="0.5" width="8" height="8" fill="#fff" stroke="#6a7fa0"/><path d="M2 4.5H7" stroke="#2a3f6a"/></svg>
<svg class="a" style="left:941px;top:574px;" width="16" height="17" viewBox="0 0 16 17"><rect x="1" y="7" width="4" height="9" fill="#3f86cf"/><rect x="5" y="1" width="5" height="15" fill="#f0b030"/><rect x="10" y="4" width="5" height="12" fill="#d83a2a"/></svg>
<div class="a t" style="left:960px;top:576.00px;height:14px;line-height:14px;font-size:10.9px;color:#1a1a1a">Simulation</div>
<svg class="a" style="left:945px;top:598px;" width="9" height="9" viewBox="0 0 9 9"><rect x="0.5" y="0.5" width="8" height="8" fill="#fff" stroke="#6a7fa0"/><path d="M2 4.5H7" stroke="#2a3f6a"/></svg>
<svg class="a" style="left:957px;top:595px;" width="17" height="15" viewBox="0 0 17 15"><defs><linearGradient id="fg" x1="0" y1="0" x2="0" y2="1"><stop offset="0" stop-color="#fff6c8"/><stop offset="1" stop-color="#f0cf6a"/></linearGradient></defs><path d="M1 3.5H6L7.5 2H15.5V13.5H1Z" fill="#f3d77a" stroke="#b8963a" stroke-width="0.9"/><path d="M1 6.5H15.5V13.5H1Z" fill="url(#fg)" stroke="#b8963a" stroke-width="0.9"/></svg>
<div class="a t" style="left:976px;top:596.00px;height:14px;line-height:14px;font-size:10.9px;color:#1a1a1a">Uncertain Variables</div>
<svg class="a" style="left:961px;top:618px;" width="9" height="9" viewBox="0 0 9 9"><rect x="0.5" y="0.5" width="8" height="8" fill="#fff" stroke="#6a7fa0"/><path d="M2 4.5H7" stroke="#2a3f6a"/></svg>
<svg class="a" style="left:973px;top:615px;" width="17" height="15" viewBox="0 0 17 15"><defs><linearGradient id="fg" x1="0" y1="0" x2="0" y2="1"><stop offset="0" stop-color="#fff6c8"/><stop offset="1" stop-color="#f0cf6a"/></linearGradient></defs><path d="M1 3.5H6L7.5 2H15.5V13.5H1Z" fill="#f3d77a" stroke="#b8963a" stroke-width="0.9"/><path d="M1 6.5H15.5V13.5H1Z" fill="url(#fg)" stroke="#b8963a" stroke-width="0.9"/></svg>
<div class="a t" style="left:992px;top:616.00px;height:14px;line-height:14px;font-size:10.9px;color:#1a1a1a">$G$19:$G$20</div>
<svg class="a" style="left:1192px;top:616px;" width="13" height="13" viewBox="0 0 13 13"><path d="M1.5 2L11.5 12M11 1.5L2 12" stroke="#e02020" stroke-width="2"/></svg>
<svg class="a" style="left:990px;top:636px;" width="15" height="14" viewBox="0 0 15 14"><rect x="0.5" y="0.5" width="14" height="13" fill="#fff" stroke="#2f5fa0"/><rect x="0.5" y="0.5" width="14" height="3" fill="#4a80c8"/><path d="M3 6H9M5 8.5H12M3 11H9" stroke="#222"/></svg>
<div class="a t" style="left:1008px;top:636.00px;height:14px;line-height:14px;font-size:10.9px;color:#1a1a1a">$G$19</div>
<svg class="a" style="left:990px;top:656px;" width="15" height="14" viewBox="0 0 15 14"><rect x="0.5" y="0.5" width="14" height="13" fill="#fff" stroke="#2f5fa0"/><rect x="0.5" y="0.5" width="14" height="3" fill="#4a80c8"/><path d="M3 6H9M5 8.5H12M3 11H9" stroke="#222"/></svg>
<div class="a t" style="left:1008px;top:656.00px;height:14px;line-height:14px;font-size:10.9px;color:#1a1a1a">$G$20</div>
<svg class="a" style="left:945px;top:678px;" width="9" height="9" viewBox="0 0 9 9"><rect x="0.5" y="0.5" width="8" height="8" fill="#fff" stroke="#6a7fa0"/><path d="M2 4.5H7" stroke="#2a3f6a"/></svg>
<svg class="a" style="left:957px;top:675px;" width="17" height="15" viewBox="0 0 17 15"><defs><linearGradient id="fg" x1="0" y1="0" x2="0" y2="1"><stop offset="0" stop-color="#fff6c8"/><stop offset="1" stop-color="#f0cf6a"/></linearGradient></defs><path d="M1 3.5H6L7.5 2H15.5V13.5H1Z" fill="#f3d77a" stroke="#b8963a" stroke-width="0.9"/><path d="M1 6.5H15.5V13.5H1Z" fill="url(#fg)" stroke="#b8963a" stroke-width="0.9"/></svg>
<div class="a t" style="left:976px;top:676.00px;height:14px;line-height:14px;font-size:10.9px;color:#1a1a1a">Uncertain Functions</div>
<svg class="a" style="left:974px;top:696px;" width="15" height="14" viewBox="0 0 15 14"><rect x="0.5" y="0.5" width="14" height="13" fill="#fff" stroke="#2f5fa0"/><rect x="0.5" y="0.5" width="14" height="3" fill="#4a80c8"/><path d="M3 6H9M5 8.5H12M3 11H9" stroke="#222"/></svg>
<div class="a t" style="left:992px;top:696.00px;height:14px;line-height:14px;font-size:10.9px;color:#1a1a1a">$G$25</div>
<svg class="a" style="left:1192px;top:696px;" width="13" height="13" viewBox="0 0 13 13"><path d="M1.5 2L11.5 12M11 1.5L2 12" stroke="#e02020" stroke-width="2"/></svg>
<svg class="a" style="left:945px;top:718px;" width="9" height="9" viewBox="0 0 9 9"><rect x="0.5" y="0.5" width="8" height="8" fill="#fff" stroke="#6a7fa0"/><path d="M2 4.5H7" stroke="#2a3f6a"/></svg>
<svg class="a" style="left:957px;top:715px;" width="17" height="15" viewBox="0 0 17 15"><defs><linearGradient id="fg" x1="0" y1="0" x2="0" y2="1"><stop offset="0" stop-color="#fff6c8"/><stop offset="1" stop-color="#f0cf6a"/></linearGradient></defs><path d="M1 3.5H6L7.5 2H15.5V13.5H1Z" fill="#f3d77a" stroke="#b8963a" stroke-width="0.9"/><path d="M1 6.5H15.5V13.5H1Z" fill="url(#fg)" stroke="#b8963a" stroke-width="0.9"/></svg>
<div class="a t" style="left:976px;top:716.00px;height:14px;line-height:14px;font-size:10.9px;color:#1a1a1a">Correlation Matrices</div>
<svg class="a" style="left:945px;top:738px;" width="9" height="9" viewBox="0 0 9 9"><rect x="0.5" y="0.5" width="8" height="8" fill="#fff" stroke="#6a7fa0"/><path d="M2 4.5H7" stroke="#2a3f6a"/></svg>
<svg class="a" style="left:957px;top:735px;" width="17" height="15" viewBox="0 0 17 15"><defs><linearGradient id="fg" x1="0" y1="0" x2="0" y2="1"><stop offset="0" stop-color="#fff6c8"/><stop offset="1" stop-color="#f0cf6a"/></linearGradient></defs><path d="M1 3.5H6L7.5 2H15.5V13.5H1Z" fill="#f3d77a" stroke="#b8963a" stroke-width="0.9"/><path d="M1 6.5H15.5V13.5H1Z" fill="url(#fg)" stroke="#b8963a" stroke-width="0.9"/></svg>
<div class="a t" style="left:976px;top:736.00px;height:14px;line-height:14px;font-size:10.9px;color:#1a1a1a">Parameters</div>
<svg class="a" style="left:929px;top:758px;" width="9" height="9" viewBox="0 0 9 9"><rect x="0.5" y="0.5" width="8" height="8" fill="#fff" stroke="#6a7fa0"/><path d="M2 4.5H7" stroke="#2a3f6a"/></svg>
<svg class="a" style="left:941px;top:754px;" width="17" height="18" viewBox="0 0 17 18"><ellipse cx="10" cy="4" rx="6" ry="3" fill="#cfe3f5" stroke="#3f78b8"/><path d="M4 4V14A6 3 0 0 0 16 14V4" fill="#cfe3f5" stroke="#3f78b8"/><rect x="1" y="6" width="7" height="10" rx="2" fill="#e8f2fb" stroke="#3f78b8"/></svg>
<div class="a t" style="left:960px;top:756.00px;height:14px;line-height:14px;font-size:10.9px;color:#1a1a1a">Data Mining</div>
<svg class="a" style="left:945px;top:778px;" width="9" height="9" viewBox="0 0 9 9"><rect x="0.5" y="0.5" width="8" height="8" fill="#fff" stroke="#6a7fa0"/><path d="M2 4.5H7" stroke="#2a3f6a"/></svg>
<svg class="a" style="left:957px;top:775px;" width="17" height="15" viewBox="0 0 17 15"><defs><linearGradient id="fg" x1="0" y1="0" x2="0" y2="1"><stop offset="0" stop-color="#fff6c8"/><stop offset="1" stop-color="#f0cf6a"/></linearGradient></defs><path d="M1 3.5H6L7.5 2H15.5V13.5H1Z" fill="#f3d77a" stroke="#b8963a" stroke-width="0.9"/><path d="M1 6.5H15.5V13.5H1Z" fill="url(#fg)" stroke="#b8963a" stroke-width="0.9"/></svg>
<div class="a t" style="left:976px;top:776.00px;height:14px;line-height:14px;font-size:10.9px;color:#1a1a1a">Data</div>
<svg class="a" style="left:961px;top:798px;" width="9" height="9" viewBox="0 0 9 9"><rect x="0.5" y="0.5" width="8" height="8" fill="#fff" stroke="#6a7fa0"/><path d="M2 4.5H7M4.5 2V7" stroke="#2a3f6a"/></svg>
<svg class="a" style="left:973px;top:795px;" width="17" height="16" viewBox="0 0 17 16"><rect x="5" y="1.5" width="11" height="13" fill="#e8f4ea" stroke="#1f7a3a"/><path d="M8 5H14M8 8H14M8 11H14M11 2V14" stroke="#1f7a3a" stroke-width="0.8"/><rect x="0.5" y="3" width="8" height="10" fill="#1f7a3a"/><path d="M2.5 5.5L6.5 10.5M6.5 5.5L2.5 10.5" stroke="#fff" stroke-width="1.2"/></svg>
<div class="a t" style="left:992px;top:796.00px;height:14px;line-height:14px;font-size:10.9px;color:#1a1a1a">optimal</div>
<svg class="a" style="left:945px;top:818px;" width="9" height="9" viewBox="0 0 9 9"><rect x="0.5" y="0.5" width="8" height="8" fill="#fff" stroke="#6a7fa0"/><path d="M2 4.5H7" stroke="#2a3f6a"/></svg>
<svg class="a" style="left:957px;top:815px;" width="17" height="15" viewBox="0 0 17 15"><defs><linearGradient id="fg" x1="0" y1="0" x2="0" y2="1"><stop offset="0" stop-color="#fff6c8"/><stop offset="1" stop-color="#f0cf6a"/></linearGradient></defs><path d="M1 3.5H6L7.5 2H15.5V13.5H1Z" fill="#f3d77a" stroke="#b8963a" stroke-width="0.9"/><path d="M1 6.5H15.5V13.5H1Z" fill="url(#fg)" stroke="#b8963a" stroke-width="0.9"/></svg>
<div class="a t" style="left:976px;top:816.00px;height:14px;line-height:14px;font-size:10.9px;color:#1a1a1a">Transformations</div>
<svg class="a" style="left:945px;top:838px;" width="9" height="9" viewBox="0 0 9 9"><rect x="0.5" y="0.5" width="8" height="8" fill="#fff" stroke="#6a7fa0"/><path d="M2 4.5H7" stroke="#2a3f6a"/></svg>
<svg class="a" style="left:957px;top:835px;" width="17" height="15" viewBox="0 0 17 15"><defs><linearGradient id="fg" x1="0" y1="0" x2="0" y2="1"><stop offset="0" stop-color="#fff6c8"/><stop offset="1" stop-color="#f0cf6a"/></linearGradient></defs><path d="M1 3.5H6L7.5 2H15.5V13.5H1Z" fill="#f3d77a" stroke="#b8963a" stroke-width="0.9"/><path d="M1 6.5H15.5V13.5H1Z" fill="url(#fg)" stroke="#b8963a" stroke-width="0.9"/></svg>
<div class="a t" style="left:976px;top:836.00px;height:14px;line-height:14px;font-size:10.9px;color:#1a1a1a">Reports</div>
<div class="a" style="left:925px;top:847px;width:284px;height:3px;background:#fff"></div>
<div class="a" style="left:924px;top:849px;width:303px;height:21px;background:#007a00;border:1px solid #7fa6dc"></div>
<div class="a t" style="left:926.00px;top:852.00px;width:300px;text-align:center;height:15px;line-height:15px;font-size:11.66px;font-weight:bold;color:#fff">Solver has completed the simulation.</div>
<div class="a" style="left:54px;top:357px;width:807px;height:448px;background:#ccd9e7;border:1px solid #a9c0da;border-radius:5px 5px 3px 3px;box-shadow:1px 2px 4px rgba(0,0,0,0.25)"></div>
<div class="a t" style="left:61px;top:362.00px;height:16px;line-height:16px;font-size:12px;font-weight:bold;color:#15428b">$G$25</div>
<div class="a" style="left:58px;top:383px;width:600px;height:387px;background:#fff;border:2px solid #99bbe8"></div>
<div class="a" style="left:60px;top:385px;width:596px;height:26px;background:#dae6f4;border-bottom:1px solid #a6c4ea"></div>
<div class="a" style="left:62px;top:387px;width:65px;height:21px;background:#fcd8b2;border-radius:3px"></div>
<div class="a t" style="left:69px;top:390.50px;height:14px;line-height:14px;font-size:10.6px;color:#1f2f44">Frequency</div>
<div class="a" style="left:129px;top:390px;width:1px;height:16px;background:#a8c6ec"></div>
<div class="a t" style="left:137px;top:390.50px;height:14px;line-height:14px;font-size:11px;color:#1f2f44">Cumulative Frequency</div>
<div class="a" style="left:253px;top:390px;width:1px;height:16px;background:#a8c6ec"></div>
<div class="a t" style="left:263px;top:390.50px;height:14px;line-height:14px;font-size:11px;color:#1f2f44">Reverse Cumulative Frequency</div>
<div class="a" style="left:427px;top:390px;width:1px;height:16px;background:#a8c6ec"></div>
<div class="a t" style="left:437px;top:390.50px;height:14px;line-height:14px;font-size:11px;color:#1f2f44">Sensitivity</div>
<div class="a" style="left:497px;top:390px;width:1px;height:16px;background:#a8c6ec"></div>
<div class="a t" style="left:507px;top:390.50px;height:14px;line-height:14px;font-size:11px;color:#1f2f44">Scatter Plots</div>
<svg class="a" style="left:60px;top:411px;" width="596" height="358" viewBox="0 0 596 358"><rect x="60.5" y="16.5" width="479" height="14.5" fill="none" stroke="#dcdcdc"/><path d="M60.5 294.9H539.5" stroke="#e4e4e4"/><path d="M60.5 262.3H539.5" stroke="#e4e4e4"/><path d="M60.5 229.7H539.5" stroke="#e4e4e4"/><path d="M60.5 197.1H539.5" stroke="#e4e4e4"/><path d="M60.5 164.4H539.5" stroke="#e4e4e4"/><path d="M60.5 131.8H539.5" stroke="#e4e4e4"/><path d="M60.5 99.2H539.5" stroke="#e4e4e4"/><path d="M60.5 66.6H539.5" stroke="#e4e4e4"/><path d="M60.5 34.0H539.5" stroke="#e4e4e4"/><path d="M94.7 31.0V327.5" stroke="#e4e4e4"/><path d="M163.0 31.0V327.5" stroke="#e4e4e4"/><path d="M231.3 31.0V327.5" stroke="#e4e4e4"/><path d="M299.7 31.0V327.5" stroke="#e4e4e4"/><path d="M368.0 31.0V327.5" stroke="#e4e4e4"/><path d="M436.3 31.0V327.5" stroke="#e4e4e4"/><path d="M504.6 31.0V327.5" stroke="#e4e4e4"/><rect x="61.0" y="324.5" width="33.7" height="3.0" fill="#4781b3"/><rect x="95.7" y="273.5" width="33.2" height="54.0" fill="#4781b3"/><rect x="129.8" y="182.5" width="33.2" height="145.0" fill="#4781b3"/><rect x="164.0" y="39.5" width="33.2" height="288.0" fill="#4781b3"/><rect x="198.2" y="32.0" width="33.2" height="295.5" fill="#4781b3"/><rect x="232.3" y="46.5" width="33.2" height="281.0" fill="#4781b3"/><rect x="266.5" y="106.5" width="33.2" height="221.0" fill="#4781b3"/><rect x="300.7" y="187.5" width="33.2" height="140.0" fill="#4781b3"/><rect x="334.8" y="235.0" width="33.2" height="92.5" fill="#4781b3"/><rect x="369.0" y="273.0" width="33.2" height="54.5" fill="#4781b3"/><rect x="403.2" y="296.5" width="33.2" height="31.0" fill="#4781b3"/><rect x="437.3" y="315.0" width="33.2" height="12.5" fill="#4781b3"/><rect x="471.5" y="325.0" width="33.2" height="2.5" fill="#4781b3"/><rect x="505.6" y="326.0" width="33.2" height="1.5" fill="#4781b3"/><path d="M135.7 16.5V327.5" stroke="#f00000" stroke-width="1"/><path d="M375.2 16.5V327.5" stroke="#f00000" stroke-width="1"/><path d="M60.5 31.0V327.5H539.5V31.0" stroke="#000" stroke-width="1.3" fill="none"/><path d="M54 327.5H60.5M539.5 327.5H546" stroke="#000" stroke-width="1.1"/><path d="M54 294.9H60.5M539.5 294.9H546" stroke="#000" stroke-width="1.1"/><path d="M54 262.3H60.5M539.5 262.3H546" stroke="#000" stroke-width="1.1"/><path d="M54 229.7H60.5M539.5 229.7H546" stroke="#000" stroke-width="1.1"/><path d="M54 197.1H60.5M539.5 197.1H546" stroke="#000" stroke-width="1.1"/><path d="M54 164.4H60.5M539.5 164.4H546" stroke="#000" stroke-width="1.1"/><path d="M54 131.8H60.5M539.5 131.8H546" stroke="#000" stroke-width="1.1"/><path d="M54 99.2H60.5M539.5 99.2H546" stroke="#000" stroke-width="1.1"/><path d="M54 66.6H60.5M539.5 66.6H546" stroke="#000" stroke-width="1.1"/><path d="M54 34.0H60.5M539.5 34.0H546" stroke="#000" stroke-width="1.1"/><path d="M54 31.0H60.5M539.5 31.0H546" stroke="#000" stroke-width="1.1"/><path d="M94.7 327.5V333.5" stroke="#000" stroke-width="1.1"/><path d="M163.0 327.5V333.5" stroke="#000" stroke-width="1.1"/><path d="M231.3 327.5V333.5" stroke="#000" stroke-width="1.1"/><path d="M299.7 327.5V333.5" stroke="#000" stroke-width="1.1"/><path d="M368.0 327.5V333.5" stroke="#000" stroke-width="1.1"/><path d="M436.3 327.5V333.5" stroke="#000" stroke-width="1.1"/><path d="M504.6 327.5V333.5" stroke="#000" stroke-width="1.1"/><path d="M60.5 327.5V333.5" stroke="#000" stroke-width="1.1"/><path d="M538.8 327.5V333.5" stroke="#000" stroke-width="1.1"/></svg>
<div class="a t" style="left:72.50px;top:731.50px;width:40px;text-align:right;height:15px;line-height:15px;font-size:11.5px;color:#222">0.00</div>
<div class="a t" style="left:72.50px;top:698.89px;width:40px;text-align:right;height:15px;line-height:15px;font-size:11.5px;color:#222">0.02</div>
<div class="a t" style="left:72.50px;top:666.28px;width:40px;text-align:right;height:15px;line-height:15px;font-size:11.5px;color:#222">0.04</div>
<div class="a t" style="left:72.50px;top:633.67px;width:40px;text-align:right;height:15px;line-height:15px;font-size:11.5px;color:#222">0.06</div>
<div class="a t" style="left:72.50px;top:601.06px;width:40px;text-align:right;height:15px;line-height:15px;font-size:11.5px;color:#222">0.08</div>
<div class="a t" style="left:72.50px;top:568.44px;width:40px;text-align:right;height:15px;line-height:15px;font-size:11.5px;color:#222">0.10</div>
<div class="a t" style="left:72.50px;top:535.83px;width:40px;text-align:right;height:15px;line-height:15px;font-size:11.5px;color:#222">0.12</div>
<div class="a t" style="left:72.50px;top:503.22px;width:40px;text-align:right;height:15px;line-height:15px;font-size:11.5px;color:#222">0.14</div>
<div class="a t" style="left:72.50px;top:470.61px;width:40px;text-align:right;height:15px;line-height:15px;font-size:11.5px;color:#222">0.16</div>
<div class="a t" style="left:72.50px;top:438.00px;width:40px;text-align:right;height:15px;line-height:15px;font-size:11.5px;color:#222">0.18</div>
<div class="a t" style="left:608px;top:731.50px;height:15px;line-height:15px;font-size:11.5px;color:#222">0</div>
<div class="a t" style="left:608px;top:698.89px;height:15px;line-height:15px;font-size:11.5px;color:#222">20</div>
<div class="a t" style="left:608px;top:666.28px;height:15px;line-height:15px;font-size:11.5px;color:#222">40</div>
<div class="a t" style="left:608px;top:633.67px;height:15px;line-height:15px;font-size:11.5px;color:#222">60</div>
<div class="a t" style="left:608px;top:601.06px;height:15px;line-height:15px;font-size:11.5px;color:#222">80</div>
<div class="a t" style="left:608px;top:568.44px;height:15px;line-height:15px;font-size:11.5px;color:#222">100</div>
<div class="a t" style="left:608px;top:535.83px;height:15px;line-height:15px;font-size:11.5px;color:#222">120</div>
<div class="a t" style="left:608px;top:503.22px;height:15px;line-height:15px;font-size:11.5px;color:#222">140</div>
<div class="a t" style="left:608px;top:470.61px;height:15px;line-height:15px;font-size:11.5px;color:#222">160</div>
<div class="a t" style="left:608px;top:438.00px;height:15px;line-height:15px;font-size:11.5px;color:#222">180</div>
<div class="a t" style="left:139.66px;top:744.50px;width:30px;text-align:center;height:15px;line-height:15px;font-size:11.5px;color:#222">20</div>
<div class="a t" style="left:208.00px;top:744.50px;width:30px;text-align:center;height:15px;line-height:15px;font-size:11.5px;color:#222">30</div>
<div class="a t" style="left:276.33px;top:744.50px;width:30px;text-align:center;height:15px;line-height:15px;font-size:11.5px;color:#222">40</div>
<div class="a t" style="left:344.65px;top:744.50px;width:30px;text-align:center;height:15px;line-height:15px;font-size:11.5px;color:#222">50</div>
<div class="a t" style="left:412.99px;top:744.50px;width:30px;text-align:center;height:15px;line-height:15px;font-size:11.5px;color:#222">60</div>
<div class="a t" style="left:481.31px;top:744.50px;width:30px;text-align:center;height:15px;line-height:15px;font-size:11.5px;color:#222">70</div>
<div class="a t" style="left:549.64px;top:744.50px;width:30px;text-align:center;height:15px;line-height:15px;font-size:11.5px;color:#222">80</div>
<div class="a t" style="left:128.00px;top:428.00px;width:60px;text-align:center;height:15px;line-height:15px;font-size:11.5px;color:#222">5.00%</div>
<div class="a t" style="left:285.00px;top:428.00px;width:60px;text-align:center;height:15px;line-height:15px;font-size:11.5px;color:#222">90.00%</div>
<div class="a t" style="left:487.00px;top:428.00px;width:60px;text-align:center;height:15px;line-height:15px;font-size:11.5px;color:#222">5.00%</div>
<div class="a t" style="left:395.00px;top:412.00px;width:80px;text-align:center;height:15px;line-height:15px;font-size:11.5px;color:#222">61.05000</div>
<div class="a t" style="left:18px;top:582px;width:100px;height:16px;line-height:16px;text-align:center;font-size:11.5px;color:#222;transform:rotate(-90deg)">Relative Probability</div>
<div class="a t" style="left:587px;top:582px;width:100px;height:16px;line-height:16px;text-align:center;font-size:11.5px;color:#222;transform:rotate(-90deg)">Frequency</div>
<div class="a" style="left:658px;top:540px;width:200px;height:230px;background:#fff;border:1px solid #99bbe8"></div>
<div class="a" style="left:659px;top:568px;width:180px;height:21px;background:#fff"></div>
<div class="a" style="left:659px;top:588px;width:180px;height:1px;background:#e6e6e6"></div>
<div class="a t" style="left:665px;top:571.00px;height:14px;line-height:14px;font-size:11px;color:#222">Minimum</div>
<div class="a t" style="left:765px;top:571.00px;height:14px;line-height:14px;font-size:11px;color:#222">18</div>
<div class="a" style="left:659px;top:589px;width:180px;height:21px;background:#f7f7f7"></div>
<div class="a" style="left:659px;top:609px;width:180px;height:1px;background:#e6e6e6"></div>
<div class="a t" style="left:665px;top:592.00px;height:14px;line-height:14px;font-size:11px;color:#222">Maximum</div>
<div class="a t" style="left:765px;top:592.00px;height:14px;line-height:14px;font-size:11px;color:#222">81</div>
<div class="a" style="left:659px;top:610px;width:180px;height:21px;background:#fff"></div>
<div class="a" style="left:659px;top:630px;width:180px;height:1px;background:#e6e6e6"></div>
<div class="a t" style="left:665px;top:613.00px;height:14px;line-height:14px;font-size:11px;color:#222">Range</div>
<div class="a t" style="left:765px;top:613.00px;height:14px;line-height:14px;font-size:11px;color:#222">63</div>
<div class="a" style="left:659px;top:658px;width:180px;height:2px;background:#a6c4ea"></div>
<svg class="a" style="left:662px;top:643px;" width="10" height="10" viewBox="0 0 10 10"><rect x="0.5" y="0.5" width="9" height="9" rx="1" fill="#e4ebf3" stroke="#4a5f80"/><path d="M2.5 5H7.5" stroke="#2a3f60" stroke-width="1.3"/></svg>
<div class="a t" style="left:677px;top:640.50px;height:15px;line-height:15px;font-size:11.9px;font-weight:bold;color:#2f5a9a">Advanced Statistics</div>
<div class="a" style="left:659px;top:660px;width:180px;height:21px;background:#f7f7f7"></div>
<div class="a" style="left:659px;top:680px;width:180px;height:1px;background:#e6e6e6"></div>
<div class="a t" style="left:665px;top:663.00px;height:14px;line-height:14px;font-size:11px;color:#222">Mean Abs. Devi...</div>
<div class="a t" style="left:765px;top:663.00px;height:14px;line-height:14px;font-size:11px;color:#222">8.63615800...</div>
<div class="a" style="left:659px;top:681px;width:180px;height:21px;background:#fff"></div>
<div class="a" style="left:659px;top:701px;width:180px;height:1px;background:#e6e6e6"></div>
<div class="a t" style="left:665px;top:684.00px;height:14px;line-height:14px;font-size:11px;color:#222">SemiVariance</div>
<div class="a t" style="left:765px;top:684.00px;height:14px;line-height:14px;font-size:11px;color:#222">48.2846622...</div>
<div class="a" style="left:659px;top:702px;width:180px;height:21px;background:#f7f7f7"></div>
<div class="a" style="left:659px;top:722px;width:180px;height:1px;background:#e6e6e6"></div>
<div class="a t" style="left:665px;top:705.00px;height:14px;line-height:14px;font-size:11px;color:#222">SemiDeviation</div>
<div class="a t" style="left:765px;top:705.00px;height:14px;line-height:14px;font-size:11px;color:#222">6.94871659...</div>
<div class="a" style="left:659px;top:723px;width:180px;height:21px;background:#fff"></div>
<div class="a" style="left:659px;top:743px;width:180px;height:1px;background:#e6e6e6"></div>
<div class="a t" style="left:665px;top:726.00px;height:14px;line-height:14px;font-size:11px;color:#222">Value at Risk 9...</div>
<div class="a t" style="left:765px;top:726.00px;height:14px;line-height:14px;font-size:11px;color:#222">-26</div>
<div class="a" style="left:659px;top:744px;width:180px;height:21px;background:#f7f7f7"></div>
<div class="a" style="left:659px;top:764px;width:180px;height:1px;background:#e6e6e6"></div>
<div class="a t" style="left:665px;top:747.00px;height:14px;line-height:14px;font-size:11px;color:#222">Cond. Value at ...</div>
<div class="a t" style="left:765px;top:747.00px;height:14px;line-height:14px;font-size:11px;color:#222">-23.766666...</div>
<div class="a" style="left:839px;top:541px;width:18px;height:228px;background:#f0f0f0"></div>
<div class="a" style="left:843px;top:541px;width:10px;height:98px;background:#c2c2c2"></div>
<svg class="a" style="left:844px;top:758px;" width="9" height="5" viewBox="0 0 9 5"><path d="M0 0H8L4 4Z" fill="#333"/></svg>
<div class="a" style="left:778px;top:776px;width:74px;height:22px;background:linear-gradient(#fafafa 0,#f3f3f3 48%,#e6e6e6 52%,#e0e0e0 100%);border:1px solid #c4c4c4;border-radius:2px"></div>
<div class="a t" style="left:785.00px;top:780.00px;width:60px;text-align:center;height:14px;line-height:14px;font-size:11px;color:#1f2f44">Close</div>
<div class="a" style="left:649px;top:232px;width:578px;height:338px;background:#ccd9e7;border:1px solid #a9c0da;border-radius:5px 5px 3px 3px;box-shadow:1px 2px 4px rgba(0,0,0,0.25)"></div>
<div class="a t" style="left:656px;top:237.00px;height:16px;line-height:16px;font-size:12px;font-weight:bold;color:#15428b">$G$20</div>
<div class="a" style="left:1207px;top:237px;width:16px;height:16px;background:linear-gradient(#f4f8fd,#d8e6f6);border:1px solid #8fb2dc;border-radius:3px"></div>
<svg class="a" style="left:1209px;top:239px;" width="12" height="12" viewBox="0 0 12 12"><path d="M2.5 2.5L9.5 9.5M9.5 2.5L2.5 9.5" stroke="#1f4a8a" stroke-width="1.3"/></svg>
<div class="a" style="left:653px;top:258px;width:380px;height:277px;background:#fff;border:2px solid #99bbe8"></div>
<div class="a" style="left:655px;top:260px;width:376px;height:26px;background:#dae6f4;border-bottom:1px solid #a6c4ea"></div>
<div class="a" style="left:658px;top:262px;width:32px;height:22px;background:#fcd8b2;border-radius:3px"></div>
<div class="a t" style="left:665px;top:265.50px;height:14px;line-height:14px;font-size:11px;color:#1f2f44">PDF</div>
<div class="a" style="left:693px;top:265px;width:1px;height:16px;background:#a8c6ec"></div>
<div class="a t" style="left:703px;top:265.50px;height:14px;line-height:14px;font-size:11px;color:#1f2f44">CDF</div>
<div class="a" style="left:733px;top:265px;width:1px;height:16px;background:#a8c6ec"></div>
<div class="a t" style="left:743px;top:265.50px;height:14px;line-height:14px;font-size:11px;color:#1f2f44">Reverse CDF</div>
<svg class="a" style="left:655px;top:287px;" width="376" height="252" viewBox="0 0 376 252"><path d="M40.2 181.4H349.5" stroke="#e4e4e4"/><path d="M40.2 156.2H349.5" stroke="#e4e4e4"/><path d="M40.2 131.1H349.5" stroke="#e4e4e4"/><path d="M40.2 105.9H349.5" stroke="#e4e4e4"/><path d="M40.2 80.8H349.5" stroke="#e4e4e4"/><path d="M40.2 55.6H349.5" stroke="#e4e4e4"/><path d="M40.2 30.5H349.5" stroke="#e4e4e4"/><path d="M71.1 30.5V206.5" stroke="#e4e4e4"/><path d="M102.1 30.5V206.5" stroke="#e4e4e4"/><path d="M133.0 30.5V206.5" stroke="#e4e4e4"/><path d="M163.9 30.5V206.5" stroke="#e4e4e4"/><path d="M194.9 30.5V206.5" stroke="#e4e4e4"/><path d="M225.8 30.5V206.5" stroke="#e4e4e4"/><path d="M256.7 30.5V206.5" stroke="#e4e4e4"/><path d="M287.6 30.5V206.5" stroke="#e4e4e4"/><path d="M318.6 30.5V206.5" stroke="#e4e4e4"/><path d="M349.5 30.5V206.5" stroke="#e4e4e4"/><polygon points="40.20,206.50 40.20,206.50 40.97,206.50 41.75,206.50 42.52,206.50 43.29,206.50 44.07,206.49 44.84,206.48 45.61,206.46 46.39,206.44 47.16,206.40 47.93,206.35 48.71,206.28 49.48,206.18 50.25,206.06 51.03,205.91 51.80,205.72 52.57,205.49 53.35,205.22 54.12,204.89 54.89,204.50 55.66,204.05 56.44,203.52 57.21,202.92 57.98,202.22 58.76,201.43 59.53,200.54 60.30,199.54 61.08,198.42 61.85,197.17 62.62,195.78 63.40,194.25 64.17,192.57 64.94,190.73 65.72,188.73 66.49,186.55 67.26,184.19 68.04,181.65 68.81,178.92 69.58,175.99 70.36,172.88 71.13,169.56 71.90,166.05 72.68,162.34 73.45,158.44 74.22,154.36 75.00,150.10 75.77,145.68 76.54,141.09 77.32,136.37 78.09,131.52 78.86,126.56 79.64,121.52 80.41,116.41 81.18,111.27 81.96,106.12 82.73,100.98 83.50,95.89 84.28,90.87 85.05,85.96 85.82,81.19 86.59,76.59 87.37,72.18 88.14,68.01 88.91,64.08 89.69,60.44 90.46,57.10 91.23,54.08 92.01,51.40 92.78,49.08 93.55,47.11 94.33,45.52 95.10,44.31 95.87,43.47 96.65,43.01 97.42,42.91 98.19,43.17 98.97,43.78 99.74,44.72 100.51,45.97 101.29,47.53 102.06,49.36 102.83,51.45 103.61,53.77 104.38,56.31 105.15,59.04 105.93,61.95 106.70,65.00 107.47,68.17 108.25,71.46 109.02,74.83 109.79,78.26 110.57,81.75 111.34,85.27 112.11,88.80 112.89,92.34 113.66,95.88 114.43,99.39 115.21,102.86 115.98,106.30 116.75,109.69 117.53,113.02 118.30,116.29 119.07,119.49 119.84,122.62 120.62,125.67 121.39,128.65 122.16,131.54 122.94,134.35 123.71,137.08 124.48,139.72 125.26,142.28 126.03,144.75 126.80,147.14 127.58,149.45 128.35,151.68 129.12,153.82 129.90,155.89 130.67,157.88 131.44,159.80 132.22,161.64 132.99,163.41 133.76,165.11 134.54,166.75 135.31,168.32 136.08,169.83 136.86,171.28 137.63,172.66 138.40,174.00 139.18,175.27 139.95,176.50 140.72,177.67 141.50,178.80 142.27,179.88 143.04,180.92 143.82,181.91 144.59,182.86 145.36,183.77 146.14,184.65 146.91,185.48 147.68,186.29 148.46,187.06 149.23,187.80 150.00,188.50 150.77,189.18 151.55,189.83 152.32,190.45 153.09,191.05 153.87,191.62 154.64,192.17 155.41,192.70 156.19,193.21 156.96,193.69 157.73,194.16 158.51,194.60 159.28,195.03 160.05,195.44 160.83,195.84 161.60,196.22 162.37,196.58 163.15,196.93 163.92,197.26 164.69,197.59 165.47,197.90 166.24,198.19 167.01,198.48 167.79,198.75 168.56,199.02 169.33,199.27 170.11,199.52 170.88,199.75 171.65,199.98 172.43,200.20 173.20,200.40 173.97,200.61 174.75,200.80 175.52,200.99 176.29,201.17 177.07,201.34 177.84,201.50 178.61,201.66 179.39,201.82 180.16,201.97 180.93,202.11 181.70,202.25 182.48,202.38 183.25,202.51 184.02,202.64 184.80,202.75 185.57,202.87 186.34,202.98 187.12,203.09 187.89,203.19 188.66,203.29 189.44,203.39 190.21,203.48 190.98,203.57 191.76,203.66 192.53,203.74 193.30,203.82 194.08,203.90 194.85,203.98 195.62,204.05 196.40,204.12 197.17,204.19 197.94,204.26 198.72,204.32 199.49,204.38 200.26,204.44 201.04,204.50 201.81,204.56 202.58,204.61 203.36,204.66 204.13,204.71 204.90,204.76 205.68,204.81 206.45,204.86 207.22,204.90 208.00,204.94 208.77,204.99 209.54,205.03 210.32,205.06 211.09,205.10 211.86,205.14 212.63,205.18 213.41,205.21 214.18,205.24 214.95,205.28 215.73,205.31 216.50,205.34 217.27,205.37 218.05,205.40 218.82,205.43 219.59,205.45 220.37,205.48 221.14,205.51 221.91,205.53 222.69,205.55 223.46,205.58 224.23,205.60 225.01,205.62 225.78,205.64 226.55,205.67 227.33,205.69 228.10,205.71 228.87,205.73 229.65,205.74 230.42,205.76 231.19,205.78 231.97,205.80 232.74,205.81 233.51,205.83 234.29,205.85 235.06,205.86 235.83,205.88 236.61,205.89 237.38,205.90 238.15,205.92 238.93,205.93 239.70,205.94 240.47,205.96 241.25,205.97 242.02,205.98 242.79,205.99 243.56,206.00 244.34,206.02 245.11,206.03 245.88,206.04 246.66,206.05 247.43,206.06 248.20,206.07 248.98,206.08 249.75,206.09 250.52,206.09 251.30,206.10 252.07,206.11 252.84,206.12 253.62,206.13 254.39,206.14 255.16,206.14 255.94,206.15 256.71,206.16 257.48,206.17 258.26,206.17 259.03,206.18 259.80,206.19 260.58,206.19 261.35,206.20 262.12,206.21 262.90,206.21 263.67,206.22 264.44,206.22 265.22,206.23 265.99,206.23 266.76,206.24 267.54,206.25 268.31,206.25 269.08,206.26 269.86,206.26 270.63,206.27 271.40,206.27 272.18,206.27 272.95,206.28 273.72,206.28 274.49,206.29 275.27,206.29 276.04,206.30 276.81,206.30 277.59,206.30 278.36,206.31 279.13,206.31 279.91,206.31 280.68,206.32 281.45,206.32 282.23,206.33 283.00,206.33 283.77,206.33 284.55,206.33 285.32,206.34 286.09,206.34 286.87,206.34 287.64,206.35 288.41,206.35 289.19,206.35 289.96,206.36 290.73,206.36 291.51,206.36 292.28,206.36 293.05,206.37 293.83,206.37 294.60,206.37 295.37,206.37 296.15,206.37 296.92,206.38 297.69,206.38 298.47,206.38 299.24,206.38 300.01,206.39 300.79,206.39 301.56,206.39 302.33,206.39 303.11,206.39 303.88,206.40 304.65,206.40 305.42,206.40 306.20,206.40 306.97,206.40 307.74,206.40 308.52,206.41 309.29,206.41 310.06,206.41 310.84,206.41 311.61,206.41 312.38,206.41 313.16,206.41 313.93,206.42 314.70,206.42 315.48,206.42 316.25,206.42 317.02,206.42 317.80,206.42 318.57,206.42 319.34,206.43 320.12,206.43 320.89,206.43 321.66,206.43 322.44,206.43 323.21,206.43 323.98,206.43 324.76,206.43 325.53,206.43 326.30,206.44 327.08,206.44 327.85,206.44 328.62,206.44 329.40,206.44 330.17,206.44 330.94,206.44 331.72,206.44 332.49,206.44 333.26,206.44 334.04,206.45 334.81,206.45 335.58,206.45 336.35,206.45 337.13,206.45 337.90,206.45 338.67,206.45 339.45,206.45 340.22,206.45 340.99,206.45 341.77,206.45 342.54,206.45 343.31,206.45 344.09,206.46 344.86,206.46 345.63,206.46 346.41,206.46 347.18,206.46 347.95,206.46 348.73,206.46 349.50,206.50" fill="#4781b3"/><path d="M72.7 30.5V206.5" stroke="#f00000" stroke-width="1"/><path d="M148.0 30.5V206.5" stroke="#f00000" stroke-width="1"/><path d="M40.2 30.5V206.5H349.5" stroke="#8c8c8c" stroke-width="1.2" fill="none"/><path d="M34.2 206.5H40.2" stroke="#000" stroke-width="1.1"/><path d="M34.2 181.4H40.2" stroke="#000" stroke-width="1.1"/><path d="M34.2 156.2H40.2" stroke="#000" stroke-width="1.1"/><path d="M34.2 131.1H40.2" stroke="#000" stroke-width="1.1"/><path d="M34.2 105.9H40.2" stroke="#000" stroke-width="1.1"/><path d="M34.2 80.8H40.2" stroke="#000" stroke-width="1.1"/><path d="M34.2 55.6H40.2" stroke="#000" stroke-width="1.1"/><path d="M34.2 30.5H40.2" stroke="#000" stroke-width="1.1"/><path d="M40.2 206.5V212.5" stroke="#000" stroke-width="1.1"/><path d="M71.1 206.5V212.5" stroke="#000" stroke-width="1.1"/><path d="M102.1 206.5V212.5" stroke="#000" stroke-width="1.1"/><path d="M133.0 206.5V212.5" stroke="#000" stroke-width="1.1"/><path d="M163.9 206.5V212.5" stroke="#000" stroke-width="1.1"/><path d="M194.9 206.5V212.5" stroke="#000" stroke-width="1.1"/><path d="M225.8 206.5V212.5" stroke="#000" stroke-width="1.1"/><path d="M256.7 206.5V212.5" stroke="#000" stroke-width="1.1"/><path d="M287.6 206.5V212.5" stroke="#000" stroke-width="1.1"/><path d="M318.6 206.5V212.5" stroke="#000" stroke-width="1.1"/><path d="M349.5 206.5V212.5" stroke="#000" stroke-width="1.1"/></svg>
<div class="a t" style="left:647.00px;top:486.50px;width:40px;text-align:right;height:15px;line-height:15px;font-size:11.5px;color:#222">0.00</div>
<div class="a t" style="left:647.00px;top:461.36px;width:40px;text-align:right;height:15px;line-height:15px;font-size:11.5px;color:#222">0.05</div>
<div class="a t" style="left:647.00px;top:436.21px;width:40px;text-align:right;height:15px;line-height:15px;font-size:11.5px;color:#222">0.10</div>
<div class="a t" style="left:647.00px;top:411.07px;width:40px;text-align:right;height:15px;line-height:15px;font-size:11.5px;color:#222">0.15</div>
<div class="a t" style="left:647.00px;top:385.93px;width:40px;text-align:right;height:15px;line-height:15px;font-size:11.5px;color:#222">0.20</div>
<div class="a t" style="left:647.00px;top:360.79px;width:40px;text-align:right;height:15px;line-height:15px;font-size:11.5px;color:#222">0.25</div>
<div class="a t" style="left:647.00px;top:335.64px;width:40px;text-align:right;height:15px;line-height:15px;font-size:11.5px;color:#222">0.30</div>
<div class="a t" style="left:647.00px;top:310.50px;width:40px;text-align:right;height:15px;line-height:15px;font-size:11.5px;color:#222">0.35</div>
<div class="a t" style="left:680.20px;top:499.00px;width:30px;text-align:center;height:15px;line-height:15px;font-size:11.5px;color:#222">4</div>
<div class="a t" style="left:711.13px;top:499.00px;width:30px;text-align:center;height:15px;line-height:15px;font-size:11.5px;color:#222">6</div>
<div class="a t" style="left:742.06px;top:499.00px;width:30px;text-align:center;height:15px;line-height:15px;font-size:11.5px;color:#222">8</div>
<div class="a t" style="left:772.99px;top:499.00px;width:30px;text-align:center;height:15px;line-height:15px;font-size:11.5px;color:#222">10</div>
<div class="a t" style="left:803.92px;top:499.00px;width:30px;text-align:center;height:15px;line-height:15px;font-size:11.5px;color:#222">12</div>
<div class="a t" style="left:834.85px;top:499.00px;width:30px;text-align:center;height:15px;line-height:15px;font-size:11.5px;color:#222">14</div>
<div class="a t" style="left:865.78px;top:499.00px;width:30px;text-align:center;height:15px;line-height:15px;font-size:11.5px;color:#222">16</div>
<div class="a t" style="left:896.71px;top:499.00px;width:30px;text-align:center;height:15px;line-height:15px;font-size:11.5px;color:#222">18</div>
<div class="a t" style="left:927.64px;top:499.00px;width:30px;text-align:center;height:15px;line-height:15px;font-size:11.5px;color:#222">20</div>
<div class="a t" style="left:958.57px;top:499.00px;width:30px;text-align:center;height:15px;line-height:15px;font-size:11.5px;color:#222">22</div>
<div class="a t" style="left:989.50px;top:499.00px;width:30px;text-align:center;height:15px;line-height:15px;font-size:11.5px;color:#222">24</div>
<div class="a t" style="left:707.50px;top:302.50px;width:40px;text-align:center;height:15px;line-height:15px;font-size:11.5px;color:#222">5%</div>
<div class="a t" style="left:782.50px;top:302.50px;width:40px;text-align:center;height:15px;line-height:15px;font-size:11.5px;color:#222">95%</div>
<div class="a" style="left:1033px;top:259px;width:171px;height:22px;background:#fff;border:1px solid #b5c5d8"></div>
<div class="a" style="left:1187px;top:260px;width:16px;height:20px;background:linear-gradient(#f4f4f4,#d6d6d6);border-left:1px solid #c8c8c8"></div>
<svg class="a" style="left:1190px;top:266px;" width="10" height="7" viewBox="0 0 10 7"><path d="M1 1L5 5L9 1" stroke="#1f4a8a" stroke-width="2" fill="none"/></svg>
<div class="a t" style="left:1037px;top:262.50px;height:15px;line-height:15px;font-size:11.5px;color:#111">Parameters</div>
<div class="a" style="left:1033px;top:286px;width:172px;height:249px;background:#fff;border:1px solid #99bbe8"></div>
<div class="a" style="left:1034px;top:314.5px;width:170px;height:2px;background:#a6c4ea"></div>
<svg class="a" style="left:1038px;top:299.5px;" width="10" height="10" viewBox="0 0 10 10"><rect x="0.5" y="0.5" width="9" height="9" rx="1" fill="#e4ebf3" stroke="#4a5f80"/><path d="M2.5 5H7.5" stroke="#2a3f60" stroke-width="1.3"/></svg>
<div class="a t" style="left:1052px;top:297.00px;height:15px;line-height:15px;font-size:11.8px;font-weight:bold;color:#2f5a9a">Uncertain Variable</div>
<div class="a" style="left:1034px;top:317px;width:170px;height:21px;background:#fff"></div>
<div class="a" style="left:1034px;top:337px;width:170px;height:1px;background:#e6e6e6"></div>
<div class="a t" style="left:1040px;top:320.00px;height:14px;line-height:14px;font-size:11px;color:#222">Address</div>
<div class="a t" style="left:1140px;top:320.00px;height:14px;line-height:14px;font-size:11px;color:#222">$G$20</div>
<div class="a" style="left:1034px;top:338px;width:170px;height:21px;background:#f7f7f7"></div>
<div class="a" style="left:1034px;top:358px;width:170px;height:1px;background:#e6e6e6"></div>
<div class="a t" style="left:1040px;top:341.00px;height:14px;line-height:14px;font-size:11px;color:#222">Formula</div>
<div class="a t" style="left:1140px;top:341.00px;height:14px;line-height:14px;font-size:11px;color:#222">=psiloglo...</div>
<div class="a" style="left:1034px;top:359px;width:170px;height:21px;background:#fff"></div>
<div class="a" style="left:1034px;top:379px;width:170px;height:1px;background:#e6e6e6"></div>
<div class="a t" style="left:1040px;top:362.00px;height:14px;line-height:14px;font-size:11px;color:#222">Distribution</div>
<div class="a t" style="left:1140px;top:362.00px;height:14px;line-height:14px;font-size:11px;color:#222">LogLogistic</div>
<div class="a" style="left:1034px;top:407px;width:170px;height:2px;background:#a6c4ea"></div>
<svg class="a" style="left:1038px;top:392px;" width="10" height="10" viewBox="0 0 10 10"><rect x="0.5" y="0.5" width="9" height="9" rx="1" fill="#e4ebf3" stroke="#4a5f80"/><path d="M2.5 5H7.5" stroke="#2a3f60" stroke-width="1.3"/></svg>
<div class="a t" style="left:1052px;top:389.50px;height:15px;line-height:15px;font-size:11.8px;font-weight:bold;color:#2f5a9a">Parameters</div>
<div class="a" style="left:1034px;top:409px;width:170px;height:21px;background:#f7f7f7"></div>
<div class="a" style="left:1034px;top:429px;width:170px;height:1px;background:#e6e6e6"></div>
<div class="a t" style="left:1040px;top:412.00px;height:14px;line-height:14px;font-size:11px;color:#222">loc</div>
<div class="a t" style="left:1140px;top:412.00px;height:14px;line-height:14px;font-size:11px;color:#222">4</div>
<div class="a" style="left:1034px;top:430px;width:170px;height:21px;background:#fff"></div>
<div class="a" style="left:1034px;top:450px;width:170px;height:1px;background:#e6e6e6"></div>
<div class="a t" style="left:1040px;top:433.00px;height:14px;line-height:14px;font-size:11px;color:#222">scale</div>
<div class="a t" style="left:1140px;top:433.00px;height:14px;line-height:14px;font-size:11px;color:#222">4</div>
<div class="a" style="left:1034px;top:451px;width:170px;height:21px;background:#f7f7f7"></div>
<div class="a" style="left:1034px;top:471px;width:170px;height:1px;background:#e6e6e6"></div>
<div class="a t" style="left:1040px;top:454.00px;height:14px;line-height:14px;font-size:11px;color:#222">shape</div>
<div class="a t" style="left:1140px;top:454.00px;height:14px;line-height:14px;font-size:11px;color:#222">5</div>
<div class="a" style="left:1034px;top:472px;width:170px;height:21px;background:#fff"></div>
<div class="a" style="left:1034px;top:492px;width:170px;height:1px;background:#e6e6e6"></div>
<div class="a t" style="left:1040px;top:475.00px;height:14px;line-height:14px;font-size:11px;color:#222">Compound</div>
<div class="a t" style="left:1140px;top:475.00px;height:14px;line-height:14px;font-size:11px;color:#222"></div>
<div class="a" style="left:1034px;top:520px;width:170px;height:2px;background:#a6c4ea"></div>
<svg class="a" style="left:1038px;top:505px;" width="10" height="10" viewBox="0 0 10 10"><rect x="0.5" y="0.5" width="9" height="9" rx="1" fill="#e4ebf3" stroke="#4a5f80"/><path d="M2.5 5H7.5" stroke="#2a3f60" stroke-width="1.3"/></svg>
<div class="a t" style="left:1052px;top:502.50px;height:15px;line-height:15px;font-size:11.8px;font-weight:bold;color:#2f5a9a">Control Parameters</div>
<div class="a" style="left:1034px;top:522px;width:170px;height:12px;background:#fff"></div>
<div class="a t" style="left:1040px;top:525.00px;height:14px;line-height:14px;font-size:11px;color:#222">Name</div>
<div class="a t" style="left:1140px;top:525.00px;height:14px;line-height:14px;font-size:11px;color:#222"></div>
<div class="a" style="left:1034px;top:534px;width:170px;height:1px;background:#99bbe8"></div>
<div class="a" style="left:1205px;top:259px;width:18px;height:276px;background:#f0f0f0;border:1px solid #cfdbe8"></div>
<div class="a" style="left:1208px;top:276px;width:12px;height:146px;background:#c2c2c2"></div>
<svg class="a" style="left:1210px;top:263px;" width="9" height="5" viewBox="0 0 9 5"><path d="M0 4H8L4 0Z" fill="#999"/></svg>
<svg class="a" style="left:1210px;top:524px;" width="9" height="5" viewBox="0 0 9 5"><path d="M0 0H8L4 4Z" fill="#333"/></svg>
<div class="a" style="left:1142px;top:540px;width:75px;height:21px;background:linear-gradient(#fafafa 0,#f3f3f3 48%,#e6e6e6 52%,#e0e0e0 100%);border:1px solid #c4c4c4;border-radius:2px"></div>
<div class="a t" style="left:1149.50px;top:544.00px;width:60px;text-align:center;height:14px;line-height:14px;font-size:11px;color:#1f2f44">Save</div>
<div class="a" style="left:21px;top:168px;width:138px;height:148px;background:#f0f0f0;border:1px solid #9ec0e8;box-shadow:1px 1px 2px rgba(0,0,0,0.15)"></div>
<div class="a" style="left:28px;top:172px;width:125px;height:21px;background:linear-gradient(#fdfdfd 0,#f7f7f7 48%,#e8e8e8 52%,#e4e4e4 100%);border:1px solid #d2d2d2;border-radius:3px"></div>
<svg class="a" style="left:30px;top:173px;" width="20" height="20" viewBox="0 0 20 20"><path d="M5 5L16 17" stroke="#222" stroke-width="2.6"/><path d="M4 4L6 6" stroke="#fff" stroke-width="1.5"/><path d="M8 2L9 4.5M11 3.5L9.5 5M2.5 8L4.5 7" stroke="#e8c840" stroke-width="0.9"/><circle cx="9" cy="2" r="0.9" fill="#e8c840"/><circle cx="1.5" cy="6" r="0.7" fill="#e8c840"/></svg>
<div class="a t" style="left:51px;top:175.50px;height:14px;line-height:14px;font-size:11px;color:#1f2f44">Distribution Wizard</div>
<div class="a" style="left:24px;top:193px;width:132px;height:24px;background:linear-gradient(#ebf3fd,#c8ddf6);border:1px solid #a6c6ee;border-radius:4px"></div>
<svg class="a" style="left:27px;top:198.5px;" width="16" height="16" viewBox="0 0 16 16"><path d="M2 0.5V15.5M0.5 14.5H15.5" stroke="#4a4a4a" stroke-width="1.1" fill="none"/><path d="M0.3 2.5L2 0.3L3.7 2.5M0.3 13.2L2 15.5L3.7 13.2M13.3 12.8L15.6 14.5L13.3 16.2" stroke="#4a4a4a" stroke-width="0.9" fill="none"/><path d="M4 14L8 3L12 14Z" fill="#6fdc6f"/><path d="M4 14L8 3L12 14" stroke="#8a7ae8" stroke-width="0.9" fill="none"/></svg>
<div class="a t" style="left:49px;top:198.50px;height:14px;line-height:14px;font-size:10.6px;color:#1f2f44">Common</div>
<svg class="a" style="left:144px;top:200.5px;" width="7" height="10" viewBox="0 0 7 10"><path d="M0.5 0.5V9.5L6 5Z" fill="#4a90e2"/></svg>
<svg class="a" style="left:27px;top:222.5px;" width="16" height="16" viewBox="0 0 16 16"><path d="M2 0.5V15.5M0.5 14.5H15.5" stroke="#4a4a4a" stroke-width="1.1" fill="none"/><path d="M0.3 2.5L2 0.3L3.7 2.5M0.3 13.2L2 15.5L3.7 13.2M13.3 12.8L15.6 14.5L13.3 16.2" stroke="#4a4a4a" stroke-width="0.9" fill="none"/><path d="M4 14L8 3L12 14Z" fill="#6fdc6f"/><path d="M4 14L8 3L12 14" stroke="#8a7ae8" stroke-width="0.9" fill="none"/></svg>
<div class="a t" style="left:49px;top:222.50px;height:14px;line-height:14px;font-size:10.6px;color:#1f2f44">Advanced</div>
<svg class="a" style="left:144px;top:224.5px;" width="7" height="10" viewBox="0 0 7 10"><path d="M0.5 0.5V9.5L6 5Z" fill="#4a90e2"/></svg>
<svg class="a" style="left:27px;top:246.5px;" width="16" height="16" viewBox="0 0 16 16"><path d="M2 0.5V15.5M0.5 14.5H15.5" stroke="#4a4a4a" stroke-width="1.1" fill="none"/><path d="M0.3 2.5L2 0.3L3.7 2.5M0.3 13.2L2 15.5L3.7 13.2M13.3 12.8L15.6 14.5L13.3 16.2" stroke="#4a4a4a" stroke-width="0.9" fill="none"/><path d="M4 14L8 3L12 14Z" fill="#6fdc6f"/><path d="M4 14L8 3L12 14" stroke="#8a7ae8" stroke-width="0.9" fill="none"/></svg>
<div class="a t" style="left:49px;top:246.50px;height:14px;line-height:14px;font-size:10.6px;color:#1f2f44">Exotic</div>
<svg class="a" style="left:144px;top:248.5px;" width="7" height="10" viewBox="0 0 7 10"><path d="M0.5 0.5V9.5L6 5Z" fill="#4a90e2"/></svg>
<svg class="a" style="left:27px;top:270.5px;" width="16" height="16" viewBox="0 0 16 16"><path d="M2 0.5V15.5M0.5 14.5H15.5" stroke="#4a4a4a" stroke-width="1.1" fill="none"/><path d="M0.3 2.5L2 0.3L3.7 2.5M0.3 13.2L2 15.5L3.7 13.2M13.3 12.8L15.6 14.5L13.3 16.2" stroke="#4a4a4a" stroke-width="0.9" fill="none"/><path d="M4 14L8 3L12 14Z" fill="#6fdc6f"/><path d="M4 14L8 3L12 14" stroke="#8a7ae8" stroke-width="0.9" fill="none"/></svg>
<div class="a t" style="left:49px;top:270.50px;height:14px;line-height:14px;font-size:10.6px;color:#1f2f44">Discrete</div>
<svg class="a" style="left:144px;top:272.5px;" width="7" height="10" viewBox="0 0 7 10"><path d="M0.5 0.5V9.5L6 5Z" fill="#4a90e2"/></svg>
<svg class="a" style="left:27px;top:294.5px;" width="16" height="16" viewBox="0 0 16 16"><path d="M2 0.5V15.5M0.5 14.5H15.5" stroke="#4a4a4a" stroke-width="1.1" fill="none"/><path d="M0.3 2.5L2 0.3L3.7 2.5M0.3 13.2L2 15.5L3.7 13.2M13.3 12.8L15.6 14.5L13.3 16.2" stroke="#4a4a4a" stroke-width="0.9" fill="none"/><path d="M4 14L8 3L12 14Z" fill="#6fdc6f"/><path d="M4 14L8 3L12 14" stroke="#8a7ae8" stroke-width="0.9" fill="none"/></svg>
<div class="a t" style="left:49px;top:294.50px;height:14px;line-height:14px;font-size:10.6px;color:#1f2f44">Custom</div>
<svg class="a" style="left:144px;top:296.5px;" width="7" height="10" viewBox="0 0 7 10"><path d="M0.5 0.5V9.5L6 5Z" fill="#4a90e2"/></svg>
<div class="a" style="left:157px;top:193px;width:125px;height:246px;background:#f0f0f0;border:1px solid #9ec0e8;box-shadow:1px 1px 2px rgba(0,0,0,0.15)"></div>
<div class="a" style="left:160px;top:317px;width:120px;height:24px;background:linear-gradient(#ebf3fd,#c8ddf6);border:1px solid #a6c6ee;border-radius:4px"></div>
<svg class="a" style="left:163px;top:202px;" width="16" height="16" viewBox="0 0 16 16"><path d="M2 0.5V15.5M0.5 14.5H15.5" stroke="#4a4a4a" stroke-width="1.1" fill="none"/><path d="M0.3 2.5L2 0.3L3.7 2.5M0.3 13.2L2 15.5L3.7 13.2M13.3 12.8L15.6 14.5L13.3 16.2" stroke="#4a4a4a" stroke-width="0.9" fill="none"/><path d="M4 14L8 3L12 14Z" fill="#6fdc6f"/><path d="M4 14L8 3L12 14" stroke="#8a7ae8" stroke-width="0.9" fill="none"/></svg>
<div class="a t" style="left:184px;top:202.00px;height:14px;line-height:14px;font-size:10.7px;color:#1f2f44">Beta</div>
<svg class="a" style="left:163px;top:226px;" width="16" height="16" viewBox="0 0 16 16"><path d="M2 0.5V15.5M0.5 14.5H15.5" stroke="#4a4a4a" stroke-width="1.1" fill="none"/><path d="M0.3 2.5L2 0.3L3.7 2.5M0.3 13.2L2 15.5L3.7 13.2M13.3 12.8L15.6 14.5L13.3 16.2" stroke="#4a4a4a" stroke-width="0.9" fill="none"/><path d="M4 14L8 3L12 14Z" fill="#6fdc6f"/><path d="M4 14L8 3L12 14" stroke="#8a7ae8" stroke-width="0.9" fill="none"/></svg>
<div class="a t" style="left:184px;top:226.00px;height:14px;line-height:14px;font-size:10.7px;color:#1f2f44">Exponential</div>
<svg class="a" style="left:163px;top:250px;" width="16" height="16" viewBox="0 0 16 16"><path d="M2 0.5V15.5M0.5 14.5H15.5" stroke="#4a4a4a" stroke-width="1.1" fill="none"/><path d="M0.3 2.5L2 0.3L3.7 2.5M0.3 13.2L2 15.5L3.7 13.2M13.3 12.8L15.6 14.5L13.3 16.2" stroke="#4a4a4a" stroke-width="0.9" fill="none"/><path d="M4 14L8 3L12 14Z" fill="#6fdc6f"/><path d="M4 14L8 3L12 14" stroke="#8a7ae8" stroke-width="0.9" fill="none"/></svg>
<div class="a t" style="left:184px;top:250.00px;height:14px;line-height:14px;font-size:10.7px;color:#1f2f44">Gamma</div>
<svg class="a" style="left:163px;top:274px;" width="16" height="16" viewBox="0 0 16 16"><path d="M2 0.5V15.5M0.5 14.5H15.5" stroke="#4a4a4a" stroke-width="1.1" fill="none"/><path d="M0.3 2.5L2 0.3L3.7 2.5M0.3 13.2L2 15.5L3.7 13.2M13.3 12.8L15.6 14.5L13.3 16.2" stroke="#4a4a4a" stroke-width="0.9" fill="none"/><path d="M4 14L8 3L12 14Z" fill="#6fdc6f"/><path d="M4 14L8 3L12 14" stroke="#8a7ae8" stroke-width="0.9" fill="none"/></svg>
<div class="a t" style="left:184px;top:274.00px;height:14px;line-height:14px;font-size:10.7px;color:#1f2f44">LogNorm2</div>
<svg class="a" style="left:163px;top:298px;" width="16" height="16" viewBox="0 0 16 16"><path d="M2 0.5V15.5M0.5 14.5H15.5" stroke="#4a4a4a" stroke-width="1.1" fill="none"/><path d="M0.3 2.5L2 0.3L3.7 2.5M0.3 13.2L2 15.5L3.7 13.2M13.3 12.8L15.6 14.5L13.3 16.2" stroke="#4a4a4a" stroke-width="0.9" fill="none"/><path d="M4 14L8 3L12 14Z" fill="#6fdc6f"/><path d="M4 14L8 3L12 14" stroke="#8a7ae8" stroke-width="0.9" fill="none"/></svg>
<div class="a t" style="left:184px;top:298.00px;height:14px;line-height:14px;font-size:10.7px;color:#1f2f44">LogNormal</div>
<svg class="a" style="left:163px;top:322px;" width="16" height="16" viewBox="0 0 16 16"><path d="M2 0.5V15.5M0.5 14.5H15.5" stroke="#4a4a4a" stroke-width="1.1" fill="none"/><path d="M0.3 2.5L2 0.3L3.7 2.5M0.3 13.2L2 15.5L3.7 13.2M13.3 12.8L15.6 14.5L13.3 16.2" stroke="#4a4a4a" stroke-width="0.9" fill="none"/><path d="M4 14L8 3L12 14Z" fill="#6fdc6f"/><path d="M4 14L8 3L12 14" stroke="#8a7ae8" stroke-width="0.9" fill="none"/></svg>
<div class="a t" style="left:184px;top:322.00px;height:14px;line-height:14px;font-size:10.7px;color:#1f2f44">Normal</div>
<svg class="a" style="left:163px;top:346px;" width="16" height="16" viewBox="0 0 16 16"><path d="M2 0.5V15.5M0.5 14.5H15.5" stroke="#4a4a4a" stroke-width="1.1" fill="none"/><path d="M0.3 2.5L2 0.3L3.7 2.5M0.3 13.2L2 15.5L3.7 13.2M13.3 12.8L15.6 14.5L13.3 16.2" stroke="#4a4a4a" stroke-width="0.9" fill="none"/><path d="M4 14L8 3L12 14Z" fill="#6fdc6f"/><path d="M4 14L8 3L12 14" stroke="#8a7ae8" stroke-width="0.9" fill="none"/></svg>
<div class="a t" style="left:184px;top:346.00px;height:14px;line-height:14px;font-size:10.7px;color:#1f2f44">Pert</div>
<svg class="a" style="left:163px;top:370px;" width="16" height="16" viewBox="0 0 16 16"><path d="M2 0.5V15.5M0.5 14.5H15.5" stroke="#4a4a4a" stroke-width="1.1" fill="none"/><path d="M0.3 2.5L2 0.3L3.7 2.5M0.3 13.2L2 15.5L3.7 13.2M13.3 12.8L15.6 14.5L13.3 16.2" stroke="#4a4a4a" stroke-width="0.9" fill="none"/><path d="M4 14L8 3L12 14Z" fill="#6fdc6f"/><path d="M4 14L8 3L12 14" stroke="#8a7ae8" stroke-width="0.9" fill="none"/></svg>
<div class="a t" style="left:184px;top:370.00px;height:14px;line-height:14px;font-size:10.7px;color:#1f2f44">Triangular</div>
<svg class="a" style="left:163px;top:394px;" width="16" height="16" viewBox="0 0 16 16"><path d="M2 0.5V15.5M0.5 14.5H15.5" stroke="#4a4a4a" stroke-width="1.1" fill="none"/><path d="M0.3 2.5L2 0.3L3.7 2.5M0.3 13.2L2 15.5L3.7 13.2M13.3 12.8L15.6 14.5L13.3 16.2" stroke="#4a4a4a" stroke-width="0.9" fill="none"/><path d="M4 14L8 3L12 14Z" fill="#6fdc6f"/><path d="M4 14L8 3L12 14" stroke="#8a7ae8" stroke-width="0.9" fill="none"/></svg>
<div class="a t" style="left:184px;top:394.00px;height:14px;line-height:14px;font-size:10.7px;color:#1f2f44">Uniform</div>
<svg class="a" style="left:163px;top:418px;" width="16" height="16" viewBox="0 0 16 16"><path d="M2 0.5V15.5M0.5 14.5H15.5" stroke="#4a4a4a" stroke-width="1.1" fill="none"/><path d="M0.3 2.5L2 0.3L3.7 2.5M0.3 13.2L2 15.5L3.7 13.2M13.3 12.8L15.6 14.5L13.3 16.2" stroke="#4a4a4a" stroke-width="0.9" fill="none"/><path d="M4 14L8 3L12 14Z" fill="#6fdc6f"/><path d="M4 14L8 3L12 14" stroke="#8a7ae8" stroke-width="0.9" fill="none"/></svg>
<div class="a t" style="left:184px;top:418.00px;height:14px;line-height:14px;font-size:10.7px;color:#1f2f44">Weibull</div>
<div class="a t" style="left:16px;top:877px;height:18px;line-height:18px;font-size:14.2px;color:#333">© 2016 <span style="color:#4d7fbf">Frontline Systems Inc.</span> Analytic Solver® and XLMiner® are trademarks of Frontline Systems Inc.</div>
</body></html>
